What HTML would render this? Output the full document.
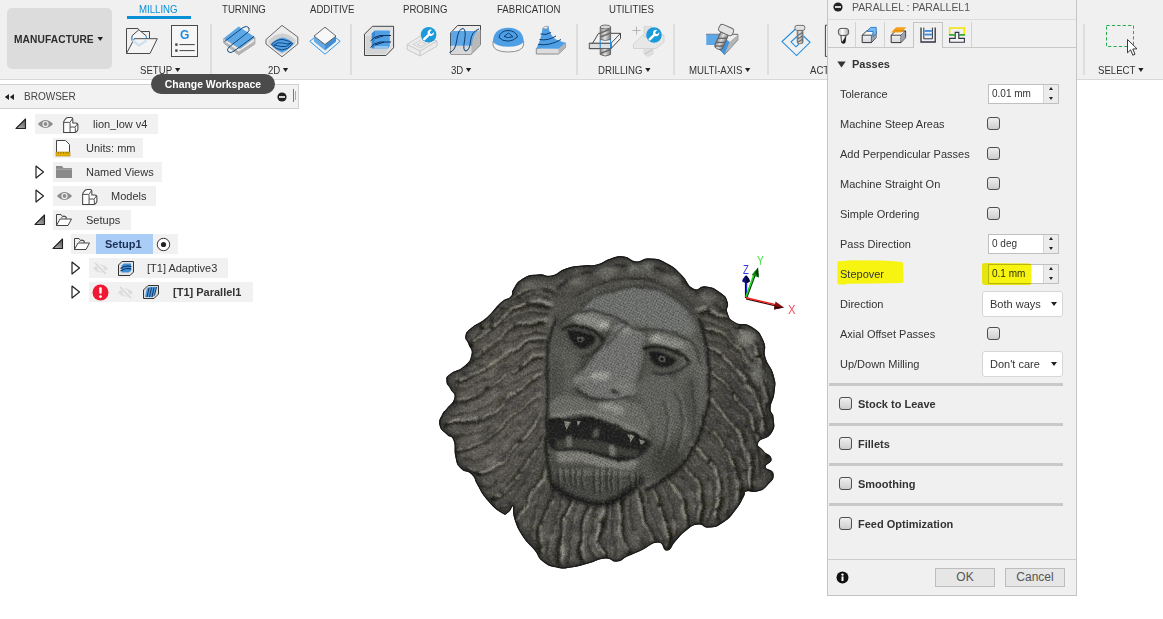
<!DOCTYPE html>
<html>
<head>
<meta charset="utf-8">
<title>Fusion 360 - Manufacture</title>
<style>
html,body{margin:0;padding:0;}
body{width:1163px;height:619px;overflow:hidden;background:#fff;font-family:"Liberation Sans",sans-serif;font-size:11px;color:#333;position:relative;}
.abs{position:absolute;}
#toolbar{left:0;top:0;width:1163px;height:80px;background:#f0f0f0;border-bottom:1px solid #d8d8d8;box-sizing:border-box;}
#wsbtn{left:7px;top:8px;width:105px;height:61px;background:#dcdcdc;border-radius:5px;}
#wsbtn span{position:absolute;left:7px;top:25px;transform:scaleX(.927);transform-origin:0 0;white-space:nowrap;font-weight:bold;font-size:11px;color:#2c2c2c;letter-spacing:0.1px;}
.tab{top:3px;font-size:11px;color:#333;white-space:nowrap;transform:scaleX(.875);transform-origin:0 0;}
.tab.on{color:#0a8fd6;}
.grp{top:64px;font-size:11px;color:#333;white-space:nowrap;transform:scaleX(.875);transform-origin:0 0;}
.car{display:inline-block;width:0;height:0;border-left:3px solid transparent;border-right:3px solid transparent;border-top:4px solid #222;vertical-align:middle;margin-left:3px;position:relative;top:-1px;}
.vsep{top:24px;width:2px;height:51px;background:#dddddd;margin-left:-1px;}
#tooltip{left:151px;top:74px;width:124px;height:20px;border-radius:10px;background:#4b4b4b;color:#fff;font-weight:bold;font-size:11px;line-height:20px;text-align:center;}
#browserhdr{left:0;top:84px;width:299px;height:25px;background:#f2f2f2;border:1px solid #d0d0d0;border-left:none;box-sizing:border-box;}
.row{height:20px;background:#f1f1f1;}
.rtxt{font-size:11px;color:#333;white-space:nowrap;line-height:13px;}
/* dialog */
#dlg{left:827px;top:0;width:250px;height:596px;background:#f0f0f0;border:1px solid #c4c4c4;border-top:none;box-sizing:border-box;}
.lbl{left:12px;font-size:11px;color:#333;white-space:nowrap;line-height:13px;}
.cb{width:13px;height:13px;box-sizing:border-box;border:1px solid #4e4e4e;border-radius:3px;background:linear-gradient(#efefef,#cdcdcd);}
.inp{left:160px;width:71px;height:20px;box-sizing:border-box;border:1px solid #c0c0c0;background:#fff;}
.inp span{position:absolute;left:3px;top:3px;font-size:10px;color:#333;}
.spin{position:absolute;right:0;top:0;width:14px;height:18px;background:#ececec;border-left:1px solid #d4d4d4;}
.spin i{position:absolute;left:5px;width:0;height:0;border-left:2px solid transparent;border-right:2px solid transparent;}
.spin i.u{top:2px;border-bottom:3px solid #222;}
.spin i.d{top:12px;border-top:3px solid #222;}
.sel{left:154px;width:81px;height:26px;box-sizing:border-box;border:1px solid #d6d6d6;border-radius:3px;background:#fff;}
.sel span{position:absolute;left:7px;top:6px;font-size:11px;color:#333;}
.sel i{position:absolute;right:5px;top:10px;width:0;height:0;border-left:3px solid transparent;border-right:3px solid transparent;border-top:4px solid #222;}
.hsep{left:1px;width:234px;height:3px;background:#c9c9c9;}
.sec{left:30px;font-weight:bold;font-size:11px;color:#333;white-space:nowrap;line-height:13px;}
.btn{top:568px;width:60px;height:19px;box-sizing:border-box;border:1px solid #bdbdbd;background:#e6e6e6;font-size:12px;color:#555;text-align:center;line-height:17px;}
</style>
</head>
<body>

<!-- ======= VIEWPORT (lion + triad) ======= -->
<svg class="abs" id="scene" style="left:0;top:0" width="1163" height="619" viewBox="0 0 1163 619">
<!--LION_START--><defs>
  <filter id="b1" x="-30%" y="-30%" width="160%" height="160%"><feGaussianBlur stdDeviation="0.8"/></filter>
  <filter id="b15" x="-30%" y="-30%" width="160%" height="160%"><feGaussianBlur stdDeviation="1.5"/></filter>
  <filter id="b2" x="-30%" y="-30%" width="160%" height="160%"><feGaussianBlur stdDeviation="2"/></filter>
  <filter id="b3" x="-30%" y="-30%" width="160%" height="160%"><feGaussianBlur stdDeviation="3"/></filter>
  <filter id="b5" x="-30%" y="-30%" width="160%" height="160%"><feGaussianBlur stdDeviation="5"/></filter>
  <filter id="b8" x="-40%" y="-40%" width="180%" height="180%"><feGaussianBlur stdDeviation="8"/></filter>
  <filter id="grain" x="0" y="0" width="100%" height="100%">
    <feTurbulence type="fractalNoise" baseFrequency="0.55" numOctaves="2" seed="7" result="n"/>
    <feColorMatrix in="n" type="matrix" values="0 0 0 0 0  0 0 0 0 0  0 0 0 0 0  2.2 1.6 0 0 -1.55"/>
  </filter>
  <filter id="grainL" x="0" y="0" width="100%" height="100%">
    <feTurbulence type="fractalNoise" baseFrequency="0.5" numOctaves="2" seed="3" result="n"/>
    <feColorMatrix in="n" type="matrix" values="0 0 0 0 0.85  0 0 0 0 0.85  0 0 0 0 0.8  0 2.0 1.4 0 -1.6"/>
  </filter>
  <filter id="wob" x="-10%" y="-10%" width="120%" height="120%">
    <feTurbulence type="fractalNoise" baseFrequency="0.04" numOctaves="3" seed="11" result="t"/>
    <feDisplacementMap in="SourceGraphic" in2="t" scale="9" xChannelSelector="R" yChannelSelector="G"/>
  </filter>
  <filter id="wobf" x="-10%" y="-10%" width="120%" height="120%">
    <feTurbulence type="fractalNoise" baseFrequency="0.08" numOctaves="2" seed="5" result="t"/>
    <feDisplacementMap in="SourceGraphic" in2="t" scale="3.5" xChannelSelector="R" yChannelSelector="G"/>
  </filter>
  <filter id="marble" x="0" y="0" width="100%" height="100%">
    <feTurbulence type="fractalNoise" baseFrequency="0.05 0.08" numOctaves="4" seed="21" result="n"/>
    <feColorMatrix in="n" type="matrix" values="0 0 0 0 0.05  0 0 0 0 0.05  0 0 0 0 0.05  3.2 0 0 0 -1.4"/>
  </filter>
  <filter id="marbleL" x="0" y="0" width="100%" height="100%">
    <feTurbulence type="fractalNoise" baseFrequency="0.07 0.1" numOctaves="4" seed="33" result="n"/>
    <feColorMatrix in="n" type="matrix" values="0 0 0 0 0.72  0 0 0 0 0.72  0 0 0 0 0.68  0 3.4 0 0 -1.8"/>
  </filter>
  <pattern id="dots" width="2.6" height="2.6" patternUnits="userSpaceOnUse" patternTransform="rotate(28)"><circle cx="1" cy="1" r="0.55" fill="#1e1e1c"/></pattern>
  <path id="lionsil" d="M597.0 265.0 C605.4 262.9 602.9 261.4 611.0 259.0 C619.1 256.6 616.5 256.1 624.0 257.0 C631.5 257.9 628.2 261.4 636.0 262.0 C643.8 262.6 640.7 258.4 650.0 259.0 C659.3 259.6 657.7 259.2 667.0 264.0 C676.3 268.8 673.2 267.5 681.0 275.0 C688.8 282.5 685.5 285.4 693.0 289.0 C700.5 292.6 697.9 285.8 706.0 287.0 C714.1 288.2 713.7 288.5 720.0 293.0 C726.3 297.5 724.9 296.0 727.0 302.0 C729.1 308.0 724.6 306.7 727.0 313.0 C729.4 319.3 727.8 318.8 735.0 323.0 C742.2 327.2 742.6 321.6 751.0 327.0 C759.4 332.4 758.8 331.7 763.0 341.0 C767.2 350.3 762.0 347.8 765.0 358.0 C768.0 368.2 770.3 364.8 773.0 375.0 C775.7 385.2 774.9 382.1 774.0 392.0 C773.1 401.9 770.3 400.2 770.0 408.0 C769.7 415.8 772.7 410.5 773.0 418.0 C773.3 425.5 775.5 425.8 771.0 433.0 C766.5 440.2 760.4 436.6 758.0 442.0 C755.6 447.4 759.1 445.9 763.0 451.0 C766.9 456.1 770.4 454.2 771.0 459.0 C771.6 463.8 764.4 462.5 765.0 467.0 C765.6 471.5 772.4 468.6 773.0 474.0 C773.6 479.4 771.8 479.9 767.0 485.0 C762.2 490.1 763.3 489.2 757.0 491.0 C750.7 492.8 750.2 489.2 746.0 491.0 C741.8 492.8 746.3 491.3 743.0 497.0 C739.7 502.7 741.0 502.5 735.0 510.0 C729.0 517.5 730.8 516.9 723.0 522.0 C715.2 527.1 716.5 526.4 709.0 527.0 C701.5 527.6 704.9 523.1 698.0 524.0 C691.1 524.9 692.9 524.9 686.0 530.0 C679.1 535.1 680.7 535.0 675.0 541.0 C669.3 547.0 672.1 549.7 667.0 550.0 C661.9 550.3 665.8 542.0 658.0 542.0 C650.2 542.0 650.3 545.8 641.0 550.0 C631.7 554.2 634.2 552.7 627.0 556.0 C619.8 559.3 623.6 560.4 617.0 561.0 C610.4 561.6 613.7 557.4 605.0 558.0 C596.3 558.6 598.2 560.3 588.0 563.0 C577.8 565.7 580.3 565.8 571.0 567.0 C561.7 568.2 565.4 568.8 557.0 567.0 C548.6 565.2 549.6 566.1 543.0 561.0 C536.4 555.9 541.0 557.5 535.0 550.0 C529.0 542.5 529.0 545.3 523.0 536.0 C517.0 526.7 518.0 528.0 515.0 519.0 C512.0 510.0 515.1 508.1 513.0 506.0 C510.9 503.9 511.6 510.2 508.0 512.0 C504.4 513.8 507.3 515.9 501.0 512.0 C494.7 508.1 493.9 507.1 487.0 499.0 C480.1 490.9 482.5 492.5 478.0 485.0 C473.5 477.5 477.1 479.1 472.0 474.0 C466.9 468.9 465.8 473.1 461.0 468.0 C456.2 462.9 458.1 465.4 456.0 457.0 C453.9 448.6 456.7 446.9 454.0 440.0 C451.3 433.1 451.2 438.5 447.0 434.0 C442.8 429.5 441.2 431.0 440.0 425.0 C438.8 419.0 440.9 418.8 443.0 414.0 C445.1 409.2 443.4 413.8 447.0 409.0 C450.6 404.2 453.8 404.0 455.0 398.0 C456.2 392.0 453.4 394.1 451.0 389.0 C448.6 383.9 447.0 385.5 447.0 381.0 C447.0 376.5 445.9 378.2 451.0 374.0 C456.1 369.8 457.7 372.7 464.0 367.0 C470.3 361.3 470.5 361.9 472.0 355.0 C473.5 348.1 470.8 349.7 469.0 344.0 C467.2 338.3 465.1 340.8 466.0 336.0 C466.9 331.2 465.7 333.4 472.0 328.0 C478.3 322.6 478.3 325.5 487.0 318.0 C495.7 310.5 493.8 309.3 501.0 303.0 C508.2 296.7 507.1 301.2 511.0 297.0 C514.9 292.8 510.4 294.4 514.0 289.0 C517.6 283.6 515.8 283.2 523.0 279.0 C530.2 274.8 529.3 275.9 538.0 275.0 C546.7 274.1 543.6 277.8 552.0 276.0 C560.4 274.2 556.7 272.0 566.0 269.0 C575.3 266.0 573.7 267.2 583.0 266.0 C592.3 264.8 588.6 267.1 597.0 265.0 Z"/>
  <clipPath id="lionclip"><use href="#lionsil"/></clipPath>
</defs>
<g id="lion">
<use href="#lionsil" fill="#56544e" stroke="#1a1a19" stroke-width="1.2" stroke-linejoin="round"/>
<g clip-path="url(#lionclip)">
<ellipse cx="500" cy="400" rx="45" ry="80" fill="#67645d" filter="url(#b8)"/>
<ellipse cx="600" cy="530" rx="70" ry="30" fill="#5c5a54" filter="url(#b8)"/>
<ellipse cx="745" cy="420" rx="22" ry="70" fill="#45433f" filter="url(#b8)"/>
<g filter="url(#wob)">
<path d="M552.0 292.0 C543.0 292.0 542.3 286.7 525.0 292.0 C507.7 297.3 515.0 296.0 500.0 308.0 C485.0 320.0 486.7 321.3 480.0 328.0" stroke="#121211" stroke-width="5.2" fill="none" filter="url(#b15)" stroke-linecap="round" opacity="0.95"/>
<path d="M548.9 297.4 C540.0 297.8 540.0 292.2 522.1 298.6 C504.2 305.0 510.4 303.4 495.3 316.6 C480.1 329.8 482.9 331.0 476.7 338.2" stroke="#121211" stroke-width="3.0" fill="none" filter="url(#b15)" stroke-linecap="round" opacity="0.7"/>
<path d="M548.0 306.0 C538.7 306.7 538.0 301.3 520.0 308.0 C502.0 314.7 510.7 313.3 494.0 326.0 C477.3 338.7 478.0 339.3 470.0 346.0" stroke="#121211" stroke-width="5.2" fill="none" filter="url(#b15)" stroke-linecap="round" opacity="0.95"/>
<path d="M547.6 312.9 C537.6 314.3 536.9 309.6 517.6 317.1 C498.4 324.6 506.6 322.6 489.7 335.4 C472.8 348.3 474.5 348.9 466.9 355.7" stroke="#121211" stroke-width="3.0" fill="none" filter="url(#b15)" stroke-linecap="round" opacity="0.7"/>
<path d="M545.0 322.0 C535.0 324.0 534.0 319.3 515.0 328.0 C496.0 336.7 504.3 336.7 488.0 348.0 C471.7 359.3 473.3 357.3 466.0 362.0" stroke="#121211" stroke-width="5.2" fill="none" filter="url(#b15)" stroke-linecap="round" opacity="0.95"/>
<path d="M545.8 332.2 C535.9 333.7 536.1 328.0 516.2 336.8 C496.3 345.5 504.0 346.3 486.2 358.5 C468.5 370.7 470.7 368.4 462.9 373.4" stroke="#121211" stroke-width="3.0" fill="none" filter="url(#b15)" stroke-linecap="round" opacity="0.7"/>
<path d="M544.0 340.0 C534.3 342.7 534.3 338.7 515.0 348.0 C495.7 357.3 505.0 356.7 486.0 368.0 C467.0 379.3 467.3 377.3 458.0 382.0" stroke="#121211" stroke-width="5.2" fill="none" filter="url(#b15)" stroke-linecap="round" opacity="0.95"/>
<path d="M544.5 347.3 C534.7 351.5 534.4 349.2 514.9 359.7 C495.4 370.1 506.0 368.5 486.0 378.7 C466.0 388.9 465.3 386.5 454.9 390.4" stroke="#121211" stroke-width="3.0" fill="none" filter="url(#b15)" stroke-linecap="round" opacity="0.7"/>
<path d="M542.0 358.0 C532.7 362.0 532.7 358.7 514.0 370.0 C495.3 381.3 506.7 381.3 486.0 392.0 C465.3 402.7 463.3 398.7 452.0 402.0" stroke="#121211" stroke-width="5.2" fill="none" filter="url(#b15)" stroke-linecap="round" opacity="0.95"/>
<path d="M542.7 369.5 C532.9 373.4 532.2 369.3 513.2 381.2 C494.2 393.1 506.5 394.2 485.6 405.3 C464.7 416.4 462.2 411.4 450.5 414.4" stroke="#121211" stroke-width="3.0" fill="none" filter="url(#b15)" stroke-linecap="round" opacity="0.7"/>
<path d="M540.0 378.0 C530.7 383.3 531.3 380.7 512.0 394.0 C492.7 407.3 504.0 408.0 482.0 418.0 C460.0 428.0 458.0 422.0 446.0 424.0" stroke="#121211" stroke-width="5.2" fill="none" filter="url(#b15)" stroke-linecap="round" opacity="0.95"/>
<path d="M539.0 387.7 C530.2 393.7 532.2 391.9 512.4 405.7 C492.6 419.6 499.7 419.1 479.6 429.2 C459.6 439.4 461.4 433.9 452.3 436.2" stroke="#121211" stroke-width="3.0" fill="none" filter="url(#b15)" stroke-linecap="round" opacity="0.7"/>
<path d="M538.0 398.0 C529.3 404.7 531.3 403.3 512.0 418.0 C492.7 432.7 498.7 430.7 480.0 442.0 C461.3 453.3 464.0 448.7 456.0 452.0" stroke="#121211" stroke-width="5.2" fill="none" filter="url(#b15)" stroke-linecap="round" opacity="0.95"/>
<path d="M537.2 408.5 C529.8 415.4 531.9 413.8 515.1 429.1 C498.4 444.4 503.9 443.8 486.9 454.4 C469.8 464.9 471.6 458.6 464.0 460.8" stroke="#121211" stroke-width="3.0" fill="none" filter="url(#b15)" stroke-linecap="round" opacity="0.7"/>
<path d="M540.0 418.0 C533.3 425.3 535.3 423.3 520.0 440.0 C504.7 456.7 511.3 457.3 494.0 468.0 C476.7 478.7 476.7 470.7 468.0 472.0" stroke="#121211" stroke-width="5.2" fill="none" filter="url(#b15)" stroke-linecap="round" opacity="0.95"/>
<path d="M541.2 426.8 C535.6 434.6 538.1 432.7 524.5 450.1 C511.0 467.5 515.8 466.9 500.4 479.0 C485.0 491.0 485.7 483.8 478.3 486.2" stroke="#121211" stroke-width="3.0" fill="none" filter="url(#b15)" stroke-linecap="round" opacity="0.7"/>
<path d="M543.0 438.0 C538.0 446.0 539.7 445.3 528.0 462.0 C516.3 478.7 520.7 475.3 508.0 488.0 C495.3 500.7 496.0 496.0 490.0 500.0" stroke="#121211" stroke-width="5.2" fill="none" filter="url(#b15)" stroke-linecap="round" opacity="0.95"/>
<path d="M547.1 451.4 C541.3 459.2 540.1 458.9 529.7 474.9 C519.4 490.9 525.3 487.7 516.1 499.5 C506.8 511.3 506.7 506.7 501.9 510.3" stroke="#121211" stroke-width="3.0" fill="none" filter="url(#b15)" stroke-linecap="round" opacity="0.7"/>
<path d="M548.0 468.0 C543.7 475.3 543.7 476.0 535.0 490.0 C526.3 504.0 528.3 499.3 522.0 510.0 C515.7 520.7 518.0 518.0 516.0 522.0" stroke="#121211" stroke-width="5.2" fill="none" filter="url(#b15)" stroke-linecap="round" opacity="0.95"/>
<path d="M550.7 478.8 C546.5 487.0 544.5 488.0 538.2 503.3 C531.8 518.6 534.7 512.6 531.6 524.8 C528.5 537.0 529.8 534.8 528.9 539.8" stroke="#121211" stroke-width="3.0" fill="none" filter="url(#b15)" stroke-linecap="round" opacity="0.7"/>
<path d="M556.0 490.0 C552.3 498.3 551.0 499.7 545.0 515.0 C539.0 530.3 539.7 523.0 538.0 536.0 C536.3 549.0 539.3 548.0 540.0 554.0" stroke="#121211" stroke-width="5.2" fill="none" filter="url(#b15)" stroke-linecap="round" opacity="0.95"/>
<path d="M562.1 495.2 C559.8 503.8 560.2 505.2 555.4 521.1 C550.6 537.0 549.3 529.7 547.6 542.8 C546.0 555.8 549.5 554.4 550.5 560.3" stroke="#121211" stroke-width="3.0" fill="none" filter="url(#b15)" stroke-linecap="round" opacity="0.7"/>
<path d="M572.0 502.0 C568.7 509.7 566.7 510.3 562.0 525.0 C557.3 539.7 558.7 533.0 558.0 546.0 C557.3 559.0 559.3 558.0 560.0 564.0" stroke="#121211" stroke-width="5.2" fill="none" filter="url(#b15)" stroke-linecap="round" opacity="0.95"/>
<path d="M580.2 502.8 C577.4 510.2 575.7 509.7 571.8 525.0 C567.9 540.4 569.0 536.5 568.5 548.8 C568.0 561.2 569.7 557.6 570.3 562.0" stroke="#121211" stroke-width="3.0" fill="none" filter="url(#b15)" stroke-linecap="round" opacity="0.7"/>
<path d="M590.0 506.0 C587.3 513.3 585.3 514.0 582.0 528.0 C578.7 542.0 580.0 536.0 580.0 548.0 C580.0 560.0 581.3 558.7 582.0 564.0" stroke="#121211" stroke-width="5.2" fill="none" filter="url(#b15)" stroke-linecap="round" opacity="0.95"/>
<path d="M596.2 504.7 C595.2 512.3 595.1 514.0 593.1 527.5 C591.1 540.9 589.2 533.8 590.2 544.9 C591.1 556.0 594.0 555.4 595.9 560.7" stroke="#121211" stroke-width="3.0" fill="none" filter="url(#b15)" stroke-linecap="round" opacity="0.7"/>
<path d="M606.0 506.0 C604.7 513.3 603.3 515.0 602.0 528.0 C600.7 541.0 600.7 535.0 602.0 545.0 C603.3 555.0 604.7 553.7 606.0 558.0" stroke="#121211" stroke-width="5.2" fill="none" filter="url(#b15)" stroke-linecap="round" opacity="0.95"/>
<path d="M612.8 501.2 C612.0 508.7 609.9 510.4 610.2 523.7 C610.5 537.0 611.7 530.3 613.7 541.1 C615.7 551.9 615.3 551.0 616.2 556.0" stroke="#121211" stroke-width="3.0" fill="none" filter="url(#b15)" stroke-linecap="round" opacity="0.7"/>
<path d="M622.0 500.0 C622.0 507.3 621.3 508.7 622.0 522.0 C622.7 535.3 621.3 529.3 624.0 540.0 C626.7 550.7 628.0 549.3 630.0 554.0" stroke="#121211" stroke-width="5.2" fill="none" filter="url(#b15)" stroke-linecap="round" opacity="0.95"/>
<path d="M629.0 498.0 C629.5 504.4 627.8 504.9 630.5 517.1 C633.2 529.3 632.6 524.0 637.1 534.6 C641.6 545.2 641.7 544.2 644.0 548.9" stroke="#121211" stroke-width="3.0" fill="none" filter="url(#b15)" stroke-linecap="round" opacity="0.7"/>
<path d="M638.0 492.0 C639.3 498.7 638.7 499.3 642.0 512.0 C645.3 524.7 644.0 519.3 648.0 530.0 C652.0 540.7 652.0 539.3 654.0 544.0" stroke="#121211" stroke-width="5.2" fill="none" filter="url(#b15)" stroke-linecap="round" opacity="0.95"/>
<path d="M644.0 489.6 C646.0 495.8 645.8 495.0 650.1 508.2 C654.5 521.3 652.9 516.6 657.0 529.1 C661.1 541.5 660.5 540.0 662.3 545.5" stroke="#121211" stroke-width="3.0" fill="none" filter="url(#b15)" stroke-linecap="round" opacity="0.7"/>
<path d="M652.0 488.0 C655.3 493.7 656.7 492.7 662.0 505.0 C667.3 517.3 666.0 511.0 668.0 525.0 C670.0 539.0 668.0 539.7 668.0 547.0" stroke="#121211" stroke-width="5.2" fill="none" filter="url(#b15)" stroke-linecap="round" opacity="0.95"/>
<path d="M657.1 482.0 C661.4 487.6 663.7 486.2 670.0 498.8 C676.2 511.5 674.1 507.4 675.9 520.0 C677.8 532.6 675.7 531.1 675.6 536.7" stroke="#121211" stroke-width="3.0" fill="none" filter="url(#b15)" stroke-linecap="round" opacity="0.7"/>
<path d="M666.0 478.0 C670.7 483.7 673.3 483.7 680.0 495.0 C686.7 506.3 684.0 500.3 686.0 512.0 C688.0 523.7 686.0 524.0 686.0 530.0" stroke="#121211" stroke-width="5.2" fill="none" filter="url(#b15)" stroke-linecap="round" opacity="0.95"/>
<path d="M674.7 470.3 C679.8 475.9 683.0 475.0 690.0 487.1 C696.9 499.2 694.2 493.0 695.6 506.6 C697.0 520.2 694.6 520.9 694.2 528.0" stroke="#121211" stroke-width="3.0" fill="none" filter="url(#b15)" stroke-linecap="round" opacity="0.7"/>
<path d="M680.0 462.0 C685.3 468.0 688.7 467.3 696.0 480.0 C703.3 492.7 700.7 485.3 702.0 500.0 C703.3 514.7 700.7 516.0 700.0 524.0" stroke="#121211" stroke-width="5.2" fill="none" filter="url(#b15)" stroke-linecap="round" opacity="0.95"/>
<path d="M686.0 451.9 C691.3 458.7 693.0 458.4 701.8 472.5 C710.7 486.6 710.1 477.5 712.6 494.2 C715.1 510.9 710.4 513.2 709.3 522.6" stroke="#121211" stroke-width="3.0" fill="none" filter="url(#b15)" stroke-linecap="round" opacity="0.7"/>
<path d="M692.0 445.0 C698.0 450.7 700.7 448.7 710.0 462.0 C719.3 475.3 716.7 465.7 720.0 485.0 C723.3 504.3 720.0 508.3 720.0 520.0" stroke="#121211" stroke-width="5.2" fill="none" filter="url(#b15)" stroke-linecap="round" opacity="0.95"/>
<path d="M698.2 435.6 C704.6 441.6 707.1 439.4 717.3 453.6 C727.4 467.8 725.0 457.9 728.6 478.2 C732.2 498.6 728.3 502.5 728.1 514.7" stroke="#121211" stroke-width="3.0" fill="none" filter="url(#b15)" stroke-linecap="round" opacity="0.7"/>
<path d="M702.0 425.0 C708.7 431.7 710.7 430.0 722.0 445.0 C733.3 460.0 730.7 449.7 736.0 470.0 C741.3 490.3 737.3 494.0 738.0 506.0" stroke="#121211" stroke-width="5.2" fill="none" filter="url(#b15)" stroke-linecap="round" opacity="0.95"/>
<path d="M707.8 410.8 C714.5 418.6 716.3 418.6 727.9 434.3 C739.5 450.1 736.4 437.5 742.7 458.2 C748.9 478.9 745.3 483.7 746.6 496.5" stroke="#121211" stroke-width="3.0" fill="none" filter="url(#b15)" stroke-linecap="round" opacity="0.7"/>
<path d="M710.0 400.0 C716.7 406.7 717.3 403.3 730.0 420.0 C742.7 436.7 740.7 426.7 748.0 450.0 C755.3 473.3 750.7 476.7 752.0 490.0" stroke="#121211" stroke-width="5.2" fill="none" filter="url(#b15)" stroke-linecap="round" opacity="0.95"/>
<path d="M712.9 388.2 C718.8 394.2 717.7 389.6 730.7 406.2 C743.8 422.7 742.3 414.6 752.0 437.8 C761.8 461.0 757.3 463.1 760.0 475.7" stroke="#121211" stroke-width="3.0" fill="none" filter="url(#b15)" stroke-linecap="round" opacity="0.7"/>
<path d="M712.0 375.0 C719.7 381.7 720.7 378.3 735.0 395.0 C749.3 411.7 744.7 404.0 755.0 425.0 C765.3 446.0 762.3 447.0 766.0 458.0" stroke="#121211" stroke-width="5.2" fill="none" filter="url(#b15)" stroke-linecap="round" opacity="0.95"/>
<path d="M709.9 360.5 C718.8 366.4 721.1 362.1 736.7 378.1 C752.2 394.0 746.0 385.8 756.5 408.5 C767.0 431.2 764.3 433.6 768.2 446.1" stroke="#121211" stroke-width="3.0" fill="none" filter="url(#b15)" stroke-linecap="round" opacity="0.7"/>
<path d="M710.0 350.0 C718.3 355.0 720.0 350.0 735.0 365.0 C750.0 380.0 744.0 372.7 755.0 395.0 C766.0 417.3 763.7 419.7 768.0 432.0" stroke="#121211" stroke-width="5.2" fill="none" filter="url(#b15)" stroke-linecap="round" opacity="0.95"/>
<path d="M709.5 340.2 C717.7 343.9 719.1 338.3 734.0 351.3 C748.9 364.3 742.3 357.1 754.2 379.3 C766.0 401.6 764.4 405.2 769.6 418.1" stroke="#121211" stroke-width="3.0" fill="none" filter="url(#b15)" stroke-linecap="round" opacity="0.7"/>
<path d="M706.0 330.0 C714.0 333.3 714.7 328.3 730.0 340.0 C745.3 351.7 739.3 344.3 752.0 365.0 C764.7 385.7 762.7 389.7 768.0 402.0" stroke="#121211" stroke-width="5.2" fill="none" filter="url(#b15)" stroke-linecap="round" opacity="0.95"/>
<path d="M702.9 321.1 C710.5 323.1 709.8 317.0 725.6 327.1 C741.4 337.3 736.4 332.0 750.4 351.5 C764.3 370.9 761.8 374.1 767.5 385.4" stroke="#121211" stroke-width="3.0" fill="none" filter="url(#b15)" stroke-linecap="round" opacity="0.7"/>
<path d="M700.0 312.0 C708.3 314.0 709.0 309.3 725.0 318.0 C741.0 326.7 735.0 321.3 748.0 338.0 C761.0 354.7 758.7 358.0 764.0 368.0" stroke="#121211" stroke-width="5.2" fill="none" filter="url(#b15)" stroke-linecap="round" opacity="0.95"/>
<path d="M554.8 289.2 C545.8 289.2 545.1 283.9 527.8 289.2 C510.5 294.5 517.8 293.2 502.8 305.2 C487.8 317.2 489.5 318.5 482.8 325.2" stroke="#bcb9ae" stroke-width="2.2" fill="none" filter="url(#b1)" stroke-linecap="round" opacity="0.85" stroke-dasharray="10 2 6 3"/>
<path d="M550.8 295.5 C541.9 295.9 541.9 290.3 524.0 296.7 C506.1 303.1 512.3 301.5 497.2 314.7 C482.0 327.9 484.8 329.1 478.6 336.3" stroke="#a09d93" stroke-width="1.4" fill="none" filter="url(#b1)" stroke-linecap="round" opacity="0.85" stroke-dasharray="15 4 11 6"/>
<path d="M550.8 303.2 C541.5 303.9 540.8 298.5 522.8 305.2 C504.8 311.9 513.5 310.5 496.8 323.2 C480.1 335.9 480.8 336.5 472.8 343.2" stroke="#d6d3c8" stroke-width="2.2" fill="none" filter="url(#b1)" stroke-linecap="round" opacity="0.85" stroke-dasharray="20 6 16 3"/>
<path d="M549.5 311.0 C539.5 312.4 538.8 307.7 519.5 315.2 C500.3 322.7 508.5 320.7 491.6 333.5 C474.7 346.4 476.4 347.0 468.8 353.8" stroke="#8e8b82" stroke-width="1.4" fill="none" filter="url(#b1)" stroke-linecap="round" opacity="0.85" stroke-dasharray="25 2 21 6"/>
<path d="M547.8 319.2 C537.8 321.2 536.8 316.5 517.8 325.2 C498.8 333.9 507.1 333.9 490.8 345.2 C474.5 356.5 476.1 354.5 468.8 359.2" stroke="#bcb9ae" stroke-width="2.2" fill="none" filter="url(#b1)" stroke-linecap="round" opacity="0.85" stroke-dasharray="30 4 6 3"/>
<path d="M547.7 330.3 C537.8 331.8 538.0 326.1 518.1 334.9 C498.2 343.6 505.9 344.4 488.1 356.6 C470.4 368.8 472.6 366.5 464.8 371.5" stroke="#a09d93" stroke-width="1.4" fill="none" filter="url(#b1)" stroke-linecap="round" opacity="0.85" stroke-dasharray="10 6 11 6"/>
<path d="M546.8 337.2 C537.1 339.9 537.1 335.9 517.8 345.2 C498.5 354.5 507.8 353.9 488.8 365.2 C469.8 376.5 470.1 374.5 460.8 379.2" stroke="#d6d3c8" stroke-width="2.2" fill="none" filter="url(#b1)" stroke-linecap="round" opacity="0.85" stroke-dasharray="15 2 16 3"/>
<path d="M546.4 345.4 C536.6 349.6 536.3 347.3 516.8 357.8 C497.3 368.2 507.9 366.6 487.9 376.8 C467.9 387.0 467.2 384.6 456.8 388.5" stroke="#8e8b82" stroke-width="1.4" fill="none" filter="url(#b1)" stroke-linecap="round" opacity="0.85" stroke-dasharray="20 4 21 6"/>
<path d="M544.8 355.2 C535.5 359.2 535.5 355.9 516.8 367.2 C498.1 378.5 509.5 378.5 488.8 389.2 C468.1 399.9 466.1 395.9 454.8 399.2" stroke="#bcb9ae" stroke-width="2.2" fill="none" filter="url(#b1)" stroke-linecap="round" opacity="0.85" stroke-dasharray="25 6 6 3"/>
<path d="M544.6 367.6 C534.8 371.5 534.1 367.4 515.1 379.3 C496.1 391.2 508.4 392.3 487.5 403.4 C466.6 414.5 464.1 409.5 452.4 412.5" stroke="#a09d93" stroke-width="1.4" fill="none" filter="url(#b1)" stroke-linecap="round" opacity="0.85" stroke-dasharray="30 2 11 6"/>
<path d="M542.8 375.2 C533.5 380.5 534.1 377.9 514.8 391.2 C495.5 404.5 506.8 405.2 484.8 415.2 C462.8 425.2 460.8 419.2 448.8 421.2" stroke="#d6d3c8" stroke-width="2.2" fill="none" filter="url(#b1)" stroke-linecap="round" opacity="0.85" stroke-dasharray="10 4 16 3"/>
<path d="M540.9 385.8 C532.1 391.8 534.1 390.0 514.3 403.8 C494.5 417.7 501.6 417.2 481.5 427.3 C461.5 437.5 463.3 432.0 454.2 434.3" stroke="#8e8b82" stroke-width="1.4" fill="none" filter="url(#b1)" stroke-linecap="round" opacity="0.85" stroke-dasharray="15 6 21 6"/>
<path d="M540.8 395.2 C532.1 401.9 534.1 400.5 514.8 415.2 C495.5 429.9 501.5 427.9 482.8 439.2 C464.1 450.5 466.8 445.9 458.8 449.2" stroke="#bcb9ae" stroke-width="2.2" fill="none" filter="url(#b1)" stroke-linecap="round" opacity="0.85" stroke-dasharray="20 2 6 3"/>
<path d="M539.1 406.6 C531.7 413.5 533.8 411.9 517.0 427.2 C500.3 442.5 505.8 441.9 488.8 452.5 C471.7 463.0 473.5 456.7 465.9 458.9" stroke="#a09d93" stroke-width="1.4" fill="none" filter="url(#b1)" stroke-linecap="round" opacity="0.85" stroke-dasharray="25 4 11 6"/>
<path d="M542.8 415.2 C536.1 422.5 538.1 420.5 522.8 437.2 C507.5 453.9 514.1 454.5 496.8 465.2 C479.5 475.9 479.5 467.9 470.8 469.2" stroke="#d6d3c8" stroke-width="2.2" fill="none" filter="url(#b1)" stroke-linecap="round" opacity="0.85" stroke-dasharray="30 6 16 3"/>
<path d="M543.1 424.9 C537.5 432.7 540.0 430.8 526.4 448.2 C512.9 465.6 517.7 465.0 502.3 477.1 C486.9 489.1 487.6 481.9 480.2 484.3" stroke="#8e8b82" stroke-width="1.4" fill="none" filter="url(#b1)" stroke-linecap="round" opacity="0.85" stroke-dasharray="10 2 21 6"/>
<path d="M545.8 435.2 C540.8 443.2 542.5 442.5 530.8 459.2 C519.1 475.9 523.5 472.5 510.8 485.2 C498.1 497.9 498.8 493.2 492.8 497.2" stroke="#bcb9ae" stroke-width="2.2" fill="none" filter="url(#b1)" stroke-linecap="round" opacity="0.85" stroke-dasharray="15 4 6 3"/>
<path d="M549.0 449.5 C543.2 457.3 542.0 457.0 531.6 473.0 C521.3 489.0 527.2 485.8 518.0 497.6 C508.7 509.4 508.6 504.8 503.8 508.4" stroke="#a09d93" stroke-width="1.4" fill="none" filter="url(#b1)" stroke-linecap="round" opacity="0.85" stroke-dasharray="20 6 11 6"/>
<path d="M550.8 465.2 C546.5 472.5 546.5 473.2 537.8 487.2 C529.1 501.2 531.1 496.5 524.8 507.2 C518.5 517.9 520.8 515.2 518.8 519.2" stroke="#d6d3c8" stroke-width="2.2" fill="none" filter="url(#b1)" stroke-linecap="round" opacity="0.85" stroke-dasharray="25 2 16 3"/>
<path d="M552.6 476.9 C548.4 485.1 546.4 486.1 540.1 501.4 C533.7 516.7 536.6 510.7 533.5 522.9 C530.4 535.1 531.7 532.9 530.8 537.9" stroke="#8e8b82" stroke-width="1.4" fill="none" filter="url(#b1)" stroke-linecap="round" opacity="0.85" stroke-dasharray="30 4 21 6"/>
<path d="M558.8 487.2 C555.1 495.5 553.8 496.9 547.8 512.2 C541.8 527.5 542.5 520.2 540.8 533.2 C539.1 546.2 542.1 545.2 542.8 551.2" stroke="#bcb9ae" stroke-width="2.2" fill="none" filter="url(#b1)" stroke-linecap="round" opacity="0.85" stroke-dasharray="10 6 6 3"/>
<path d="M564.0 493.3 C561.7 501.9 562.1 503.3 557.3 519.2 C552.5 535.1 551.2 527.8 549.5 540.9 C547.9 553.9 551.4 552.5 552.4 558.4" stroke="#a09d93" stroke-width="1.4" fill="none" filter="url(#b1)" stroke-linecap="round" opacity="0.85" stroke-dasharray="15 2 11 6"/>
<path d="M574.8 499.2 C571.5 506.9 569.5 507.5 564.8 522.2 C560.1 536.9 561.5 530.2 560.8 543.2 C560.1 556.2 562.1 555.2 562.8 561.2" stroke="#d6d3c8" stroke-width="2.2" fill="none" filter="url(#b1)" stroke-linecap="round" opacity="0.85" stroke-dasharray="20 4 16 3"/>
<path d="M582.1 500.9 C579.3 508.3 577.6 507.8 573.7 523.1 C569.8 538.5 570.9 534.6 570.4 546.9 C569.9 559.3 571.6 555.7 572.2 560.1" stroke="#8e8b82" stroke-width="1.4" fill="none" filter="url(#b1)" stroke-linecap="round" opacity="0.85" stroke-dasharray="25 6 21 6"/>
<path d="M592.8 503.2 C590.1 510.5 588.1 511.2 584.8 525.2 C581.5 539.2 582.8 533.2 582.8 545.2 C582.8 557.2 584.1 555.9 584.8 561.2" stroke="#bcb9ae" stroke-width="2.2" fill="none" filter="url(#b1)" stroke-linecap="round" opacity="0.85" stroke-dasharray="30 2 6 3"/>
<path d="M598.1 502.8 C597.1 510.4 597.0 512.1 595.0 525.6 C593.0 539.0 591.1 531.9 592.1 543.0 C593.0 554.1 595.9 553.5 597.8 558.8" stroke="#a09d93" stroke-width="1.4" fill="none" filter="url(#b1)" stroke-linecap="round" opacity="0.85" stroke-dasharray="10 4 11 6"/>
<path d="M603.2 503.2 C601.9 510.5 600.5 512.2 599.2 525.2 C597.9 538.2 597.9 532.2 599.2 542.2 C600.5 552.2 601.9 550.9 603.2 555.2" stroke="#d6d3c8" stroke-width="2.2" fill="none" filter="url(#b1)" stroke-linecap="round" opacity="0.85" stroke-dasharray="15 6 16 3"/>
<path d="M610.9 499.3 C610.1 506.8 608.0 508.5 608.3 521.8 C608.6 535.1 609.8 528.4 611.8 539.2 C613.8 550.0 613.4 549.1 614.3 554.1" stroke="#8e8b82" stroke-width="1.4" fill="none" filter="url(#b1)" stroke-linecap="round" opacity="0.85" stroke-dasharray="20 2 21 6"/>
<path d="M619.2 497.2 C619.2 504.5 618.5 505.9 619.2 519.2 C619.9 532.5 618.5 526.5 621.2 537.2 C623.9 547.9 625.2 546.5 627.2 551.2" stroke="#bcb9ae" stroke-width="2.2" fill="none" filter="url(#b1)" stroke-linecap="round" opacity="0.85" stroke-dasharray="25 4 6 3"/>
<path d="M627.1 496.1 C627.6 502.5 625.9 503.0 628.6 515.2 C631.3 527.4 630.7 522.1 635.2 532.7 C639.7 543.3 639.8 542.3 642.1 547.0" stroke="#a09d93" stroke-width="1.4" fill="none" filter="url(#b1)" stroke-linecap="round" opacity="0.85" stroke-dasharray="30 6 11 6"/>
<path d="M635.2 489.2 C636.5 495.9 635.9 496.5 639.2 509.2 C642.5 521.9 641.2 516.5 645.2 527.2 C649.2 537.9 649.2 536.5 651.2 541.2" stroke="#d6d3c8" stroke-width="2.2" fill="none" filter="url(#b1)" stroke-linecap="round" opacity="0.85" stroke-dasharray="10 2 16 3"/>
<path d="M642.1 487.7 C644.1 493.9 643.9 493.1 648.2 506.3 C652.6 519.4 651.0 514.7 655.1 527.2 C659.2 539.6 658.6 538.1 660.4 543.6" stroke="#8e8b82" stroke-width="1.4" fill="none" filter="url(#b1)" stroke-linecap="round" opacity="0.85" stroke-dasharray="15 4 21 6"/>
<path d="M649.2 485.2 C652.5 490.9 653.9 489.9 659.2 502.2 C664.5 514.5 663.2 508.2 665.2 522.2 C667.2 536.2 665.2 536.9 665.2 544.2" stroke="#bcb9ae" stroke-width="2.2" fill="none" filter="url(#b1)" stroke-linecap="round" opacity="0.85" stroke-dasharray="20 6 6 3"/>
<path d="M655.2 480.1 C659.5 485.7 661.8 484.3 668.1 496.9 C674.3 509.6 672.2 505.5 674.0 518.1 C675.9 530.7 673.8 529.2 673.7 534.8" stroke="#a09d93" stroke-width="1.4" fill="none" filter="url(#b1)" stroke-linecap="round" opacity="0.85" stroke-dasharray="25 2 11 6"/>
<path d="M663.2 475.2 C667.9 480.9 670.5 480.9 677.2 492.2 C683.9 503.5 681.2 497.5 683.2 509.2 C685.2 520.9 683.2 521.2 683.2 527.2" stroke="#d6d3c8" stroke-width="2.2" fill="none" filter="url(#b1)" stroke-linecap="round" opacity="0.85" stroke-dasharray="30 4 16 3"/>
<path d="M672.8 468.4 C677.9 474.0 681.1 473.1 688.1 485.2 C695.0 497.3 692.3 491.1 693.7 504.7 C695.1 518.3 692.7 519.0 692.3 526.1" stroke="#8e8b82" stroke-width="1.4" fill="none" filter="url(#b1)" stroke-linecap="round" opacity="0.85" stroke-dasharray="10 6 21 6"/>
<path d="M677.2 459.2 C682.5 465.2 685.9 464.5 693.2 477.2 C700.5 489.9 697.9 482.5 699.2 497.2 C700.5 511.9 697.9 513.2 697.2 521.2" stroke="#bcb9ae" stroke-width="2.2" fill="none" filter="url(#b1)" stroke-linecap="round" opacity="0.85" stroke-dasharray="15 2 6 3"/>
<path d="M684.1 450.0 C689.4 456.8 691.1 456.5 699.9 470.6 C708.8 484.7 708.2 475.6 710.7 492.3 C713.2 509.0 708.5 511.3 707.4 520.7" stroke="#a09d93" stroke-width="1.4" fill="none" filter="url(#b1)" stroke-linecap="round" opacity="0.85" stroke-dasharray="20 4 11 6"/>
<path d="M689.2 442.2 C695.2 447.9 697.9 445.9 707.2 459.2 C716.5 472.5 713.9 462.9 717.2 482.2 C720.5 501.5 717.2 505.5 717.2 517.2" stroke="#d6d3c8" stroke-width="2.2" fill="none" filter="url(#b1)" stroke-linecap="round" opacity="0.85" stroke-dasharray="25 6 16 3"/>
<path d="M696.3 433.7 C702.7 439.7 705.2 437.5 715.4 451.7 C725.5 465.9 723.1 456.0 726.7 476.3 C730.3 496.7 726.4 500.6 726.2 512.8" stroke="#8e8b82" stroke-width="1.4" fill="none" filter="url(#b1)" stroke-linecap="round" opacity="0.85" stroke-dasharray="30 2 21 6"/>
<path d="M699.2 422.2 C705.9 428.9 707.9 427.2 719.2 442.2 C730.5 457.2 727.9 446.9 733.2 467.2 C738.5 487.5 734.5 491.2 735.2 503.2" stroke="#bcb9ae" stroke-width="2.2" fill="none" filter="url(#b1)" stroke-linecap="round" opacity="0.85" stroke-dasharray="10 4 6 3"/>
<path d="M705.9 408.9 C712.6 416.7 714.4 416.7 726.0 432.4 C737.6 448.2 734.5 435.6 740.8 456.3 C747.0 477.0 743.4 481.8 744.7 494.6" stroke="#a09d93" stroke-width="1.4" fill="none" filter="url(#b1)" stroke-linecap="round" opacity="0.85" stroke-dasharray="15 6 11 6"/>
<path d="M707.2 397.2 C713.9 403.9 714.5 400.5 727.2 417.2 C739.9 433.9 737.9 423.9 745.2 447.2 C752.5 470.5 747.9 473.9 749.2 487.2" stroke="#d6d3c8" stroke-width="2.2" fill="none" filter="url(#b1)" stroke-linecap="round" opacity="0.85" stroke-dasharray="20 2 16 3"/>
<path d="M711.0 386.3 C716.9 392.3 715.8 387.7 728.8 404.3 C741.9 420.8 740.4 412.7 750.1 435.9 C759.9 459.1 755.4 461.2 758.1 473.8" stroke="#8e8b82" stroke-width="1.4" fill="none" filter="url(#b1)" stroke-linecap="round" opacity="0.85" stroke-dasharray="25 4 21 6"/>
<path d="M709.2 372.2 C716.9 378.9 717.9 375.5 732.2 392.2 C746.5 408.9 741.9 401.2 752.2 422.2 C762.5 443.2 759.5 444.2 763.2 455.2" stroke="#bcb9ae" stroke-width="2.2" fill="none" filter="url(#b1)" stroke-linecap="round" opacity="0.85" stroke-dasharray="30 6 6 3"/>
<path d="M708.0 358.6 C716.9 364.5 719.2 360.2 734.8 376.2 C750.3 392.1 744.1 383.9 754.6 406.6 C765.1 429.3 762.4 431.7 766.3 444.2" stroke="#a09d93" stroke-width="1.4" fill="none" filter="url(#b1)" stroke-linecap="round" opacity="0.85" stroke-dasharray="10 2 11 6"/>
<path d="M707.2 347.2 C715.5 352.2 717.2 347.2 732.2 362.2 C747.2 377.2 741.2 369.9 752.2 392.2 C763.2 414.5 760.9 416.9 765.2 429.2" stroke="#d6d3c8" stroke-width="2.2" fill="none" filter="url(#b1)" stroke-linecap="round" opacity="0.85" stroke-dasharray="15 4 16 3"/>
<path d="M707.6 338.3 C715.8 342.0 717.2 336.4 732.1 349.4 C747.0 362.4 740.4 355.2 752.3 377.4 C764.1 399.7 762.5 403.3 767.7 416.2" stroke="#8e8b82" stroke-width="1.4" fill="none" filter="url(#b1)" stroke-linecap="round" opacity="0.85" stroke-dasharray="20 6 21 6"/>
<path d="M703.2 327.2 C711.2 330.5 711.9 325.5 727.2 337.2 C742.5 348.9 736.5 341.5 749.2 362.2 C761.9 382.9 759.9 386.9 765.2 399.2" stroke="#bcb9ae" stroke-width="2.2" fill="none" filter="url(#b1)" stroke-linecap="round" opacity="0.85" stroke-dasharray="25 2 6 3"/>
<path d="M701.0 319.2 C708.6 321.2 707.9 315.1 723.7 325.2 C739.5 335.4 734.5 330.1 748.5 349.6 C762.4 369.0 759.9 372.2 765.6 383.5" stroke="#a09d93" stroke-width="1.4" fill="none" filter="url(#b1)" stroke-linecap="round" opacity="0.85" stroke-dasharray="30 4 11 6"/>
<path d="M697.2 309.2 C705.5 311.2 706.2 306.5 722.2 315.2 C738.2 323.9 732.2 318.5 745.2 335.2 C758.2 351.9 755.9 355.2 761.2 365.2" stroke="#d6d3c8" stroke-width="2.2" fill="none" filter="url(#b1)" stroke-linecap="round" opacity="0.85" stroke-dasharray="10 6 16 3"/>
</g>
<g filter="url(#wobf)">
<path d="M556 290 Q575 272 600 270 Q625 262 650 268 Q680 272 700 296 Q715 300 724 312" stroke="#1c1c1a" stroke-width="2.5" fill="none" filter="url(#b1)"/>
<path d="M575 296 Q600 278 640 278 Q672 284 694 308" stroke="#222220" stroke-width="2" fill="none" filter="url(#b1)"/>
<ellipse cx="640" cy="268" rx="13" ry="5" fill="#7b7b74" filter="url(#b2)"/>
<ellipse cx="605" cy="271" rx="12" ry="5" fill="#707069" filter="url(#b2)"/>
<ellipse cx="672" cy="278" rx="10" ry="5" fill="#6e6e67" filter="url(#b2)"/>
<ellipse cx="578" cy="282" rx="10" ry="5" fill="#66665f" filter="url(#b2)"/>
<ellipse cx="708" cy="298" rx="9" ry="6" fill="#6b6b64" filter="url(#b2)"/>
<ellipse cx="746" cy="338" rx="9" ry="8" fill="#86867e" filter="url(#b2)"/>
<ellipse cx="535" cy="286" rx="10" ry="6" fill="#63635d" filter="url(#b2)"/>
<ellipse cx="757" cy="372" rx="6" ry="12" fill="#70706a" filter="url(#b2)"/>
</g>
<rect x="435" y="250" width="345" height="322" filter="url(#marble)" opacity="0.5"/>
<rect x="435" y="250" width="345" height="322" filter="url(#marbleL)" opacity="0.16"/>
<g filter="url(#wobf)">
<path d="M556.0 320.0 C564.4 302.0 561.8 309.6 575.0 300.0 C588.2 290.4 580.5 292.8 600.0 288.0 C619.5 283.2 617.5 282.2 640.0 284.0 C662.5 285.8 657.6 283.2 675.0 294.0 C692.4 304.8 688.7 303.2 698.0 320.0 C707.3 336.8 703.6 329.0 706.0 350.0 C708.4 371.0 708.4 366.6 706.0 390.0 C703.6 413.4 705.8 407.6 698.0 428.0 C690.2 448.4 694.4 441.8 680.0 458.0 C665.6 474.2 671.0 470.6 650.0 482.0 C629.0 493.4 633.4 493.0 610.0 496.0 C586.6 499.0 590.0 500.4 572.0 492.0 C554.0 483.6 558.1 486.6 550.0 468.0 C541.9 449.4 545.3 451.9 545.0 430.0 C544.7 408.1 548.4 416.0 549.0 395.0 C549.6 374.0 544.9 382.5 547.0 360.0 C549.1 337.5 547.6 338.0 556.0 320.0 Z" fill="#5b5b57" filter="url(#b3)"/>
<path d="M588.0 302.0 C595.2 294.8 594.9 294.2 612.0 290.0 C629.1 285.8 626.4 285.6 645.0 288.0 C663.6 290.4 659.9 288.4 674.0 298.0 C688.1 307.6 687.2 308.6 692.0 320.0 C696.8 331.4 699.0 332.4 690.0 336.0 C681.0 339.6 679.4 335.6 662.0 332.0 C644.6 328.4 648.8 327.6 632.0 324.0 C615.2 320.4 619.2 323.0 606.0 320.0 C592.8 317.0 593.4 319.4 588.0 314.0 C582.6 308.6 580.8 309.2 588.0 302.0 Z" fill="#7d7f7c" filter="url(#b2)"/>
<path d="M686.0 340.0 C692.6 334.0 696.3 337.0 702.0 352.0 C707.7 367.0 706.5 369.0 705.0 390.0 C703.5 411.0 703.3 408.2 697.0 422.0 C690.7 435.8 690.3 440.2 684.0 436.0 C677.7 431.8 677.2 427.2 676.0 408.0 C674.8 388.8 677.0 392.4 680.0 372.0 C683.0 351.6 679.4 346.0 686.0 340.0 Z" fill="#72726d" filter="url(#b2)"/>
<path d="M550.0 354.0 C556.0 342.0 557.6 347.0 566.0 350.0 C574.4 353.0 576.5 351.4 578.0 364.0 C579.5 376.6 576.4 376.4 571.0 392.0 C565.6 407.6 566.6 407.6 560.0 416.0 C553.4 424.4 553.2 427.8 549.0 420.0 C544.8 412.2 545.7 409.8 546.0 390.0 C546.3 370.2 544.0 366.0 550.0 354.0 Z" fill="#686863" filter="url(#b2)"/>
<path d="M640.0 380.0 C648.4 373.4 655.4 372.0 668.0 378.0 C680.6 384.0 679.6 384.4 682.0 400.0 C684.4 415.6 682.6 416.2 676.0 430.0 C669.4 443.8 667.8 449.0 660.0 446.0 C652.2 443.0 656.0 433.8 650.0 420.0 C644.0 406.2 643.0 412.0 640.0 400.0 C637.0 388.0 631.6 386.6 640.0 380.0 Z" fill="#6c6c67" filter="url(#b2)"/>
<path d="M618.0 324.0 C628.8 321.6 634.2 323.6 642.0 332.0 C649.8 340.4 645.2 338.2 644.0 352.0 C642.8 365.8 642.2 364.8 638.0 378.0 C633.8 391.2 640.8 389.7 630.0 396.0 C619.2 402.3 617.6 400.8 602.0 399.0 C586.4 397.2 586.1 396.9 578.0 390.0 C569.9 383.1 571.4 384.4 575.0 376.0 C578.6 367.6 580.7 372.8 590.0 362.0 C599.3 351.2 597.6 351.4 606.0 340.0 C614.4 328.6 607.2 326.4 618.0 324.0 Z" fill="#80817e" filter="url(#b1)"/>
<path d="M612 330 Q600 348 588 360 Q578 368 575 378" stroke="#2e2e2c" stroke-width="3" fill="none" filter="url(#b2)" opacity="0.8"/>
<path d="M644 340 Q646 362 636 384" stroke="#3a3a37" stroke-width="2.5" fill="none" filter="url(#b2)" opacity="0.7"/>
<ellipse cx="600" cy="376" rx="10" ry="4" fill="#b9b9b2" filter="url(#b2)"/>
<ellipse cx="626" cy="330" rx="7" ry="4" fill="#a2a29c" filter="url(#b2)"/>
<ellipse cx="581" cy="384" rx="4" ry="2.8" fill="#1f1f1d" filter="url(#b1)"/>
<ellipse cx="616" cy="391" rx="4.6" ry="2.8" fill="#1f1f1d" filter="url(#b1)"/>
<path d="M573 379 Q576 396 596 399 Q612 402 630 396" stroke="#242422" stroke-width="1.8" fill="none" filter="url(#b1)"/>
<ellipse cx="580" cy="381" rx="8" ry="6" fill="#8b8b86" filter="url(#b2)"/>
<ellipse cx="622" cy="387" rx="9" ry="6" fill="#8b8b86" filter="url(#b2)"/>
<ellipse cx="668" cy="462" rx="16" ry="18" fill="#3c3c39" filter="url(#b5)" opacity="0.75"/>
<ellipse cx="690" cy="400" rx="8" ry="30" fill="#454542" filter="url(#b5)" opacity="0.6"/>
<ellipse cx="556" cy="380" rx="7" ry="26" fill="#454542" filter="url(#b5)" opacity="0.6"/>
<path d="M664 400 Q672 430 660 456 M676 392 Q688 425 676 452 M690 380 Q700 410 690 440" stroke="#2a2a28" stroke-width="1.6" fill="none" filter="url(#b1)" opacity="0.7"/>
<path d="M667 400 Q675 430 663 456 M679 392 Q691 425 679 452" stroke="#a0a099" stroke-width="1.2" fill="none" filter="url(#b1)" opacity="0.6"/>
<path d="M553.0 400.0 C559.3 394.6 558.5 395.1 572.0 396.0 C585.5 396.9 581.8 401.5 598.0 403.0 C614.2 404.5 611.9 398.3 626.0 401.0 C640.1 403.7 638.7 402.7 645.0 412.0 C651.3 421.3 651.5 426.6 647.0 432.0 C642.5 437.4 641.7 432.7 630.0 430.0 C618.3 427.3 621.5 427.5 608.0 423.0 C594.5 418.5 598.8 416.8 585.0 415.0 C571.2 413.2 572.2 417.3 562.0 417.0 C551.8 416.7 553.7 419.1 551.0 414.0 C548.3 408.9 546.7 405.4 553.0 400.0 Z" fill="#777772" filter="url(#b1)"/>
<ellipse cx="612" cy="408" rx="14" ry="4.5" fill="#a4a49d" filter="url(#b2)" transform="rotate(14 612 408)"/>
<path d="M598 400 V416" stroke="#33332f" stroke-width="1.4" filter="url(#b1)"/>
<path d="M567 331 Q580 327 596 338 Q593 349 580 349 Q571 345 567 336 Z" fill="#1e1e1c" filter="url(#b1)"/>
<ellipse cx="581" cy="339" rx="3.6" ry="3.2" fill="#5c5c57"/><circle cx="581" cy="339" r="1.6" fill="#141413"/>
<path d="M648 352 Q660 348 677 360 Q672 369 660 367 Q651 363 648 356 Z" fill="#1e1e1c" filter="url(#b1)"/>
<ellipse cx="662" cy="359" rx="3.6" ry="3.2" fill="#5c5c57"/><circle cx="662" cy="359" r="1.6" fill="#141413"/>
<ellipse cx="590" cy="321" rx="19" ry="6.5" fill="#9c9c96" filter="url(#b2)" transform="rotate(14 590 321)"/>
<ellipse cx="668" cy="342" rx="19" ry="6.5" fill="#9c9c96" filter="url(#b2)" transform="rotate(16 668 342)"/>
<ellipse cx="604" cy="326" rx="6" ry="3.5" fill="#c8c8c0" filter="url(#b2)"/>
<ellipse cx="655" cy="339" rx="6" ry="3" fill="#bcbcb4" filter="url(#b2)"/>
<path d="M562 331 Q568 325 580 326 Q594 329 604 340" stroke="#141413" stroke-width="3" fill="none" filter="url(#b1)"/>
<path d="M643 349 Q654 345 666 348 Q680 352 690 362" stroke="#141413" stroke-width="3" fill="none" filter="url(#b1)"/>
<path d="M558 328 Q564 315 582 311 Q604 310 620 320 Q630 326 640 330 Q664 326 692 342 Q700 350 700 364" stroke="#2a2a28" stroke-width="1.6" fill="none" filter="url(#b1)"/>
<path d="M604 340 Q600 352 580 357 M690 362 Q676 378 652 373" stroke="#2c2c2a" stroke-width="2" fill="none" filter="url(#b1)"/>
<path d="M627 324 Q616 336 606 346" stroke="#3a3a37" stroke-width="1.6" fill="none" filter="url(#b1)"/>
<path d="M582 306 Q600 288 640 286 Q675 290 694 316" stroke="#2a2a28" stroke-width="2" fill="none" filter="url(#b15)"/>
<path d="M547.0 424.0 C549.1 416.5 548.5 419.9 556.0 419.0 C563.5 418.1 561.8 421.3 572.0 421.0 C582.2 420.7 579.8 417.1 590.0 418.0 C600.2 418.9 596.4 420.1 606.0 424.0 C615.6 427.9 611.8 427.1 622.0 431.0 C632.2 434.9 632.2 432.8 640.0 437.0 C647.8 441.2 648.0 439.3 648.0 445.0 C648.0 450.7 646.6 450.9 640.0 456.0 C633.4 461.1 636.8 461.4 626.0 462.0 C615.2 462.6 617.8 461.3 604.0 458.0 C590.2 454.7 593.2 452.8 580.0 451.0 C566.8 449.2 569.3 454.1 560.0 452.0 C550.7 449.9 552.9 452.4 549.0 444.0 C545.1 435.6 544.9 431.5 547.0 424.0 Z" fill="#242422" filter="url(#b1)"/>
<path d="M547 422 Q556 417 572 420 Q590 416 606 423 Q622 430 640 436 Q648 440 650 447" stroke="#121211" stroke-width="2.4" fill="none" filter="url(#b1)"/>
<path d="M552 416 Q572 411 590 412 Q610 416 628 426 Q640 431 648 438" stroke="#a6a69f" stroke-width="2.2" fill="none" filter="url(#b15)" opacity="0.8"/>
<path d="M556 440 Q585 436 610 444 Q626 450 640 450 L636 458 Q610 456 590 450 Q570 446 556 450 Z" fill="#45453f" filter="url(#b1)"/>
<path d="M564 421 l2.5 10 l4.5 -9 Z M627 433 l3 10 l4.5 -7 Z M577 421 l2 5 l3 -5 Z M640 439 l2 6 l3 -4Z" fill="#96968d"/>
<rect x="566" y="437" width="6" height="10" fill="#77776f" filter="url(#b1)"/><rect x="609" y="445" width="6.5" height="11" fill="#83837a" filter="url(#b1)"/>
<ellipse cx="596" cy="433" rx="3.4" ry="5" fill="#5a5a54" filter="url(#b1)"/>
<path d="M556 452 Q580 449 604 458 Q620 464 640 460 L634 469 Q612 470 596 466 Q575 460 558 463 Z" fill="#8c8c84" filter="url(#b1)"/>
<path d="M548.0 460.0 C550.4 454.0 545.6 461.3 560.0 464.0 C574.4 466.7 573.8 466.9 596.0 469.0 C618.2 471.1 620.2 472.8 634.0 471.0 C647.8 469.2 640.2 460.3 642.0 463.0 C643.8 465.7 644.8 470.7 640.0 480.0 C635.2 489.3 638.0 487.4 626.0 494.0 C614.0 500.6 616.2 500.8 600.0 502.0 C583.8 503.2 586.4 503.4 572.0 498.0 C557.6 492.6 559.2 495.4 552.0 484.0 C544.8 472.6 545.6 466.0 548.0 460.0 Z" fill="#504f4b" filter="url(#b2)"/>
<path d="M556 470 Q596 474 636 474" stroke="#84847d" stroke-width="5" fill="none" filter="url(#b2)" opacity="0.8"/>
<path d="M552 484 Q572 503 602 505 Q628 497 642 478" stroke="#101010" stroke-width="5.5" fill="none" filter="url(#b2)"/>
<path d="M546 436 Q545 468 554 486" stroke="#1a1a19" stroke-width="3" fill="none" filter="url(#b1)"/>
<path d="M558 468 q-2 8 1 15" stroke="#252523" stroke-width="1.4" fill="none" filter="url(#b1)"/>
<path d="M560.5 468 q-2 8 1 13" stroke="#94948c" stroke-width="1.1" fill="none" filter="url(#b1)" opacity="0.8"/>
<path d="M564 468 q-1 8 0 17" stroke="#252523" stroke-width="1.4" fill="none" filter="url(#b1)"/>
<path d="M566.5 468 q-1 8 0 15" stroke="#94948c" stroke-width="1.1" fill="none" filter="url(#b1)" opacity="0.8"/>
<path d="M570 468 q0 9 1 18" stroke="#252523" stroke-width="1.4" fill="none" filter="url(#b1)"/>
<path d="M572.5 468 q0 9 1 16" stroke="#94948c" stroke-width="1.1" fill="none" filter="url(#b1)" opacity="0.8"/>
<path d="M576 469 q-2 10 0 19" stroke="#252523" stroke-width="1.4" fill="none" filter="url(#b1)"/>
<path d="M578.5 469 q-2 10 0 17" stroke="#94948c" stroke-width="1.1" fill="none" filter="url(#b1)" opacity="0.8"/>
<path d="M582 469 q-1 10 1 20" stroke="#252523" stroke-width="1.4" fill="none" filter="url(#b1)"/>
<path d="M584.5 469 q-1 10 1 18" stroke="#94948c" stroke-width="1.1" fill="none" filter="url(#b1)" opacity="0.8"/>
<path d="M588 469 q0 11 0 22" stroke="#252523" stroke-width="1.4" fill="none" filter="url(#b1)"/>
<path d="M590.5 469 q0 11 0 20" stroke="#94948c" stroke-width="1.1" fill="none" filter="url(#b1)" opacity="0.8"/>
<path d="M594 470 q-2 12 1 23" stroke="#252523" stroke-width="1.4" fill="none" filter="url(#b1)"/>
<path d="M596.5 470 q-2 12 1 21" stroke="#94948c" stroke-width="1.1" fill="none" filter="url(#b1)" opacity="0.8"/>
<path d="M600 470 q-1 12 0 24" stroke="#252523" stroke-width="1.4" fill="none" filter="url(#b1)"/>
<path d="M602.5 470 q-1 12 0 22" stroke="#94948c" stroke-width="1.1" fill="none" filter="url(#b1)" opacity="0.8"/>
<path d="M606 470 q0 11 1 22" stroke="#252523" stroke-width="1.4" fill="none" filter="url(#b1)"/>
<path d="M608.5 470 q0 11 1 20" stroke="#94948c" stroke-width="1.1" fill="none" filter="url(#b1)" opacity="0.8"/>
<path d="M612 471 q-2 10 0 21" stroke="#252523" stroke-width="1.4" fill="none" filter="url(#b1)"/>
<path d="M614.5 471 q-2 10 0 19" stroke="#94948c" stroke-width="1.1" fill="none" filter="url(#b1)" opacity="0.8"/>
<path d="M618 471 q-1 10 1 20" stroke="#252523" stroke-width="1.4" fill="none" filter="url(#b1)"/>
<path d="M620.5 471 q-1 10 1 18" stroke="#94948c" stroke-width="1.1" fill="none" filter="url(#b1)" opacity="0.8"/>
<path d="M624 471 q0 9 0 18" stroke="#252523" stroke-width="1.4" fill="none" filter="url(#b1)"/>
<path d="M626.5 471 q0 9 0 16" stroke="#94948c" stroke-width="1.1" fill="none" filter="url(#b1)" opacity="0.8"/>
<path d="M630 472 q-2 8 1 17" stroke="#252523" stroke-width="1.4" fill="none" filter="url(#b1)"/>
<path d="M632.5 472 q-2 8 1 15" stroke="#94948c" stroke-width="1.1" fill="none" filter="url(#b1)" opacity="0.8"/>
<path d="M636 472 q-1 8 0 16" stroke="#252523" stroke-width="1.4" fill="none" filter="url(#b1)"/>
<path d="M638.5 472 q-1 8 0 14" stroke="#94948c" stroke-width="1.1" fill="none" filter="url(#b1)" opacity="0.8"/>
<path d="M557 318 Q546 340 547 370 Q549 400 546 428" stroke="#1e1e1c" stroke-width="2.6" fill="none" filter="url(#b1)"/>
<path d="M699 318 Q711 350 709 395 Q705 430 690 455 Q672 480 645 490" stroke="#1e1e1c" stroke-width="3" fill="none" filter="url(#b1)"/>
</g>
<path d="M556.0 320.0 C564.4 302.0 561.8 309.6 575.0 300.0 C588.2 290.4 580.5 292.8 600.0 288.0 C619.5 283.2 617.5 282.2 640.0 284.0 C662.5 285.8 657.6 283.2 675.0 294.0 C692.4 304.8 688.7 303.2 698.0 320.0 C707.3 336.8 703.6 329.0 706.0 350.0 C708.4 371.0 708.4 366.6 706.0 390.0 C703.6 413.4 705.8 407.6 698.0 428.0 C690.2 448.4 694.4 441.8 680.0 458.0 C665.6 474.2 671.0 470.6 650.0 482.0 C629.0 493.4 633.4 493.0 610.0 496.0 C586.6 499.0 590.0 500.4 572.0 492.0 C554.0 483.6 558.1 486.6 550.0 468.0 C541.9 449.4 545.3 451.9 545.0 430.0 C544.7 408.1 548.4 416.0 549.0 395.0 C549.6 374.0 544.9 382.5 547.0 360.0 C549.1 337.5 547.6 338.0 556.0 320.0 Z" fill="url(#dots)" opacity="0.7"/>
<rect x="435" y="250" width="345" height="322" filter="url(#grain)" opacity="0.22"/>
<rect x="435" y="250" width="345" height="322" filter="url(#grainL)" opacity="0.14"/>
</g>
<use href="#lionsil" fill="none" stroke="#1d1d1c" stroke-width="1" stroke-linejoin="round"/>
<g clip-path="url(#lionclip)"><use href="#lionsil" fill="none" stroke="#141413" stroke-width="5" filter="url(#b2)" opacity="0.55"/></g>
</g><!--LION_END-->
<!--TRIAD_START--><g id="triad" font-family="Liberation Sans, sans-serif">
  <path d="M745.6 298 L745.6 278" stroke="#0a0a3c" stroke-width="1.4"/>
  <path d="M746.6 298 L746.6 278" stroke="#2222d8" stroke-width="1.2"/>
  <path d="M742.2 281.5 Q742 279 746 275.2 Q750 279 749.8 281.5 Q746 284.2 742.2 281.5 Z" fill="#0c0c8a"/>
  <path d="M746 275.2 Q750 279 749.8 281.5 Q748 283 746 283.2 Z" fill="#07073c"/>
  <path d="M746.6 298 L756.2 272" stroke="#0a300a" stroke-width="1.4"/>
  <path d="M745.8 297 L755.2 271.5" stroke="#18d818" stroke-width="1.6"/>
  <path d="M751.6 275 L758 267.6 L758.8 277.6 Z" fill="#0f8a0f"/>
  <path d="M755 273 L758 267.6 L758.8 277.6 Z" fill="#0a3a0a"/>
  <path d="M746 298.8 L780 306.8" stroke="#3a0808" stroke-width="1.3"/>
  <path d="M746 297.8 L780 305.6" stroke="#ee2020" stroke-width="1.4"/>
  <path d="M775.5 301.6 L784 307.4 L774 309.4 Z" fill="#8a1010"/>
  <path d="M774.6 306 L784 307.4 L774 309.4 Z" fill="#3a0808"/>
  <text x="743" y="274" font-size="12.4" textLength="5.8" lengthAdjust="spacingAndGlyphs" fill="#3636e8">Z</text>
  <text x="757" y="264.8" font-size="12" textLength="6.8" lengthAdjust="spacingAndGlyphs" fill="#3fe03f">Y</text>
  <text x="788" y="314" font-size="12.4" textLength="7.6" lengthAdjust="spacingAndGlyphs" fill="#f4525e">X</text>
</g>
<!--TRIAD_END-->
</svg>

<!-- ======= TOOLBAR ======= -->
<div class="abs" id="toolbar">
  <div class="abs" id="wsbtn"><span>MANUFACTURE<i class="car" style="margin-left:4px"></i></span></div>

  <div class="abs tab on" style="left:139px">MILLING</div>
  <div class="abs" style="left:127px;top:16px;width:64px;height:3px;background:#0a8fd6;"></div>
  <div class="abs tab" style="left:222px">TURNING</div>
  <div class="abs tab" style="left:310px">ADDITIVE</div>
  <div class="abs tab" style="left:403px">PROBING</div>
  <div class="abs tab" style="left:497px">FABRICATION</div>
  <div class="abs tab" style="left:609px">UTILITIES</div>

  <div class="abs grp" style="left:140px">SETUP<i class="car"></i></div>
  <div class="abs grp" style="left:268px">2D<i class="car"></i></div>
  <div class="abs grp" style="left:451px">3D<i class="car"></i></div>
  <div class="abs grp" style="left:598px">DRILLING<i class="car"></i></div>
  <div class="abs grp" style="left:689px">MULTI-AXIS<i class="car"></i></div>
  <div class="abs grp" style="left:810px">ACTIONS</div>
  <div class="abs grp" style="left:1098px">SELECT<i class="car"></i></div>

  <div class="abs vsep" style="left:211px"></div>
  <div class="abs vsep" style="left:351px"></div>
  <div class="abs vsep" style="left:577px"></div>
  <div class="abs vsep" style="left:674px"></div>
  <div class="abs vsep" style="left:768px"></div>
  <div class="abs vsep" style="left:1084px"></div>
  <!--ICONS_START--><svg class="abs" style="left:0;top:0" width="1163" height="79" viewBox="0 0 1163 79">
<defs>
  <linearGradient id="metal" x1="0" x2="1" y1="0" y2="0"><stop offset="0" stop-color="#8a8a8a"/><stop offset="0.45" stop-color="#e2e2e2"/><stop offset="1" stop-color="#7a7a7a"/></linearGradient>
  <g id="wrench"><circle cx="0" cy="0" r="7.8" fill="#1d9ad9"/><path d="M-4.2 4.6 L0.2 0.2 A3.1 3.1 0 0 1 4.3 -3.9 L2.2 -1.8 L2.7 -0.2 L4.3 0.3 L6.2 -1.7 A3.1 3.1 0 0 1 1.9 2 L-2.4 6.3 A1.2 1.2 0 0 1 -4.2 4.6 Z" fill="#fff" transform="translate(-1,-1)"/></g>
</defs>
<!-- SETUP: folder with envelope -->
<g fill="none" stroke="#4a4a4a" stroke-width="1">
  <path d="M126.5 53.5 V28.5 H138 L139.5 31.5 H149.5 V38.5"/>
  <path d="M131.8 38.5 V36 L138.8 29.8 L146.4 36 V38.5" fill="#f6f6f6"/>
  <path d="M131.8 36 V40.5" stroke="#4ca3e6" stroke-width="1.6"/>
  <path d="M146.4 36 V38.5" stroke="#4ca3e6" stroke-width="1.2"/>
  <path d="M126.5 53.5 L134.3 38.7 H157.3 L150 53.5 Z" fill="#f4f4f4"/>
  <path d="M133 40.5 L139 45.5 L146.5 40.5" stroke="#cfe0ee" stroke-width="2.4"/>
</g>
<!-- SETUP: G doc -->
<rect x="171.5" y="25.5" width="26" height="31" fill="#f6f6f6" stroke="#4a4a4a" stroke-width="1"/>
<text x="184.6" y="38.6" text-anchor="middle" font-family="Liberation Sans, sans-serif" font-weight="bold" font-size="12" fill="#1e8be0">G</text>
<rect x="175.2" y="43.4" width="2.4" height="2.4" fill="#444"/><rect x="179.5" y="44.1" width="15.3" height="1" fill="#444"/>
<rect x="175.2" y="49.4" width="2.4" height="2.4" fill="#444"/><rect x="179.5" y="50.1" width="15.3" height="1" fill="#444"/>

<!-- 2D adaptive -->
<path d="M223.8 38.5 V43 L238.7 54.8 L254.8 44 V37.5 L240 48.5 Z" fill="#e8e8e8" stroke="#8a8a8a" stroke-width="0.8" stroke-linejoin="round"/>
<path d="M223.8 43 L238.7 54.8 L254.8 44 V41 L238.7 51.6 L223.8 40.5 Z" fill="#b5b5b5"/>
<path d="M223.8 38.3 L238.7 26.6 L254.8 37 L240 48.4 Z" fill="#5ea7e6"/>
<path d="M224.5 41.5 L243 27.5 Q247 25 249 28 Q250 30.5 247 33 L229 47 Q226 50 228.5 52 Q231 53.5 234 51 L254 36.5" fill="none" stroke="#0f4a7e" stroke-width="1"/>

<!-- 2D pocket -->
<path d="M266 39.5 L282 25.4 L297.8 37 V44 L282 56.8 L266 44 Z" fill="#ececec" stroke="#666" stroke-width="1" stroke-linejoin="round"/>
<path d="M268.5 40.5 Q282 27 295.5 40 V43.5 L282 54.5 L268.5 43.5 Z" fill="#d0d0d0"/>
<path d="M270.5 44.3 Q276 38.2 282.5 37.4 Q289 38 293.8 43.8 Q288 51 282 52.4 Q276 51 270.5 44.3 Z" fill="#4f9fe6"/>
<path d="M274 45 Q278 41.5 282.5 43 Q287 44.4 290.6 43.4 Q287 47.6 282 46.6 Q277 45.6 274 45 Z M271.5 44.5 Q277 38.8 283 39.6 Q289 40.5 292.6 43.6 Q288 49.8 282 50 Q276 49.5 271.5 44.5 Z" fill="none" stroke="#0f3d6e" stroke-width="0.9"/>

<!-- 2D face -->
<path d="M317 35.6 L309.8 41.3 L325 54.2 L340.2 41.3 L333 35.6" fill="none" stroke="#2f95ea" stroke-width="1"/>
<path d="M314 36.1 V41.5 L325 50.4 V44.5 Z" fill="#62abe8"/>
<path d="M336 36.1 V41.5 L325 50.4 V44.5 Z" fill="#3f8fd6"/>
<path d="M314 36.1 L325 27.2 L336 36.1 L325 44.5 Z" fill="#f8f8f8" stroke="#555" stroke-width="0.9" stroke-linejoin="round"/>

<!-- 3D adaptive -->
<path d="M364.5 55.5 V34.2 L372.4 26.3 H393.6 V47.7 L386 55.5 Z" fill="#e2e2e2" stroke="#444" stroke-width="1" stroke-linejoin="round"/>
<path d="M366 36 L374 36 V48 H388 L385.5 54 H366 Z" fill="#d4d4d4"/>
<path d="M371.7 33.5 L375 30.5 H389.8 V46 L388 48.5 H374.5 Z" fill="#4f9fe6"/>
<path d="M375 30.5 L374.5 48.5 H371.7 V33.5 Z" fill="#3b86cf"/>
<path d="M374.5 46 H388 V48.5 H374.5 Z" fill="#8fc4f2"/>
<path d="M370.5 41 Q374 36.5 380 35.5 H391 M370.5 47.5 Q374 43 380 42 H391 M375 38.5 Q380 37 384 35.5 M375 45 Q380 43.5 384 42" fill="none" stroke="#0c2f5a" stroke-width="1"/>

<!-- PROBING ghost + wrench -->
<g opacity="0.85"><path d="M407.2 44.5 L421 35.5 L437 41 V46 L420 56 L407.2 49.5 Z" fill="#ececec" stroke="#b8b8b8" stroke-width="0.8" stroke-linejoin="round"/><path d="M407.2 44.5 L420 51 L437 41 M420 51 V56" fill="none" stroke="#b8b8b8" stroke-width="0.8"/><path d="M413 44.5 L421.5 39.5 L430 42.5 L421 48 Z M417 44.5 L421.5 42 L426 43.3 L421.5 46 Z" fill="none" stroke="#c4c4c4" stroke-width="0.8"/></g>
<use href="#wrench" x="428.6" y="34.7"/>

<!-- 3D parallel -->
<path d="M450.5 54 V33 L457.5 25.5 H480.5 V44.8 L471.2 54 Z" fill="#ececec" stroke="#444" stroke-width="1" stroke-linejoin="round"/>
<path d="M471.2 54 V45.5 Q472 34 480.5 29.5 V44.8 Z" fill="#b9b9b9"/>
<path d="M450.5 46 H471.2 V54 H450.5 Z" fill="#d8d8d8"/>
<path d="M450.8 32.5 L452.5 31 H478 Q472.5 35 472 45.8 H450.8 Z" fill="#5ea7e6"/>
<path d="M449.5 52.5 Q455 51 456.5 42 Q458 28.5 463 28.5 Q466.5 29 464.5 41 Q462.5 51 466 51 Q469.5 50.5 470.5 41 Q471.5 31.5 479 29" fill="none" stroke="#0f3d6e" stroke-width="1"/>

<!-- 3D dome -->
<path d="M493 41 V45 Q494 51.8 508.3 52 Q522.5 51.8 523.6 45 V41 Z" fill="#f4f4f4" stroke="#777" stroke-width="0.8"/>
<path d="M493 42 Q493 28 508.3 27.7 Q523.6 28 523.6 42 Q520 46.5 508.3 46.8 Q497 46.5 493 42 Z" fill="#4f9fe6"/>
<path d="M499 37.5 Q500 31 508 30.5 Q516 30.8 517.5 37 Q513 41 508 41.2 Q502 41 499 37.5 Z M504 36.5 L508.5 33 L513 36.8 Q508 38.5 504 36.5 Z" fill="none" stroke="#0f3d6e" stroke-width="1"/>

<!-- 3D contour -->
<path d="M536.3 48.5 V54 H558.5 L565.6 47.5 V43 Z" fill="#dcdcdc" stroke="#777" stroke-width="0.8" stroke-linejoin="round"/>
<path d="M558.5 54 V48.8 L565.6 43 V47.5 Z" fill="#b5b5b5"/>
<path d="M536.3 48.5 Q541 40 542.5 28.5 L545 26.4 H548.5 Q549 34 556 39.5 L565.6 43 L558.5 48.8 Z" fill="#4f9fe6"/>
<path d="M542.5 28.5 L545 26.4 H548.5 L546.5 29 Z" fill="#f4f4f4" stroke="#777" stroke-width="0.5"/>
<path d="M540.5 34 Q546 35.5 551 32.5 M539.5 39.5 Q548 41 556 36 M538 44.5 Q550 46 561 39.5" fill="none" stroke="#0f3d6e" stroke-width="1"/>

<!-- DRILLING drill -->
<path d="M589.3 48.6 L598.6 33.3 H620.5 V38.6 L611 48.6 Z" fill="#f2f2f2" stroke="#444" stroke-width="1" stroke-linejoin="round"/>
<path d="M589.3 43.3 H611 L620.5 33.3 M611 43.3 V48.6" fill="none" stroke="#444" stroke-width="0.9"/>
<path d="M589.3 43.3 H611 V48.6 H589.3 Z" fill="#dedede" stroke="#444" stroke-width="0.9"/>
<rect x="600.2" y="26.5" width="10.4" height="13.5" fill="url(#metal)"/>
<ellipse cx="605.4" cy="27" rx="5.2" ry="2" fill="#d6d6d6" stroke="#555" stroke-width="0.8"/>
<path d="M600.2 27 V39.5 Q605.4 41.5 610.6 39.5 V27" fill="none" stroke="#555" stroke-width="0.8"/>
<path d="M600.5 33 L610.3 29 M600.5 37 L610.3 33" stroke="#6a6a6a" stroke-width="1.4"/>
<path d="M600.2 48.6 V54.5 Q605.4 57.5 610.6 54.5 V48.6 Z" fill="url(#metal)" stroke="#555" stroke-width="0.8"/>
<path d="M600.5 53.5 L610.3 49.5" stroke="#6a6a6a" stroke-width="1.4"/>
<path d="M600.2 39.5 V48.6 M610.6 39.5 V48.6" stroke="#1e8be0" stroke-width="1.1"/>

<!-- DRILLING ghost + wrench -->
<g opacity="0.85"><path d="M633.5 44 L643 35 H664 V42 L656 48.5 H633.5 Z" fill="#e6e6e6" stroke="#c8c8c8" stroke-width="0.8" stroke-linejoin="round"/><path d="M644 26.5 H652 V37 H644 Z M644 48.5 V54 L648 56.5 L653 54 V48.5 Z" fill="#dedede" stroke="#cfcfcf" stroke-width="0.8"/><path d="M645 54 L652.5 49.5" stroke="#c0c0c0" stroke-width="1.2"/></g>
<path d="M632.5 30.5 H640.5 M636.5 26.5 V34.5" stroke="#b5b5b5" stroke-width="1"/>
<use href="#wrench" x="654" y="35"/>

<!-- MULTI-AXIS -->
<path d="M706.3 34.3 H737.8 V40 L724.5 54.6 Z" fill="#eeeeee" stroke="#555" stroke-width="0.9" stroke-linejoin="round"/>
<path d="M737.8 34.8 V40 L724.5 54.6 L729.5 42 Z" fill="#b4b4b4"/>
<path d="M706.3 34.6 H722 L729.5 42 L724.5 54.6 L715 45 H706.3 Z" fill="#5ea7e6"/>
<path d="M729.5 42 L724.5 54.6 L719 48.5 L723 39 Z" fill="#4592dd"/>
<g transform="rotate(24 722 40)"><rect x="717.5" y="31" width="8.4" height="19" rx="3" fill="url(#metal)" stroke="#555" stroke-width="0.8"/><path d="M718 40 L725.5 36.5 M718 44.5 L725.5 41 M718 48.5 L725.5 45" stroke="#666" stroke-width="1.3"/><rect x="714.2" y="25.3" width="15" height="7.8" rx="3" fill="#e4e4e4" stroke="#666" stroke-width="0.9"/></g>

<!-- ACTIONS simulate -->
<path d="M796 28.5 L782 41.6 L796.6 55.6 L810 42.3 L803.5 36" fill="none" stroke="#1e8be0" stroke-width="1.1" stroke-linejoin="miter"/>
<path d="M797.5 36 L791 41.8 L796 46.8 L799 44" fill="none" stroke="#1e8be0" stroke-width="1.1"/>
<rect x="797.2" y="30" width="5.8" height="13.6" rx="1.6" fill="url(#metal)" stroke="#666" stroke-width="0.8"/>
<path d="M797.6 35.5 L802.6 32.5 M797.6 39 L802.6 36 M797.6 42.3 L802.6 39.3" stroke="#6a6a6a" stroke-width="1.1"/>
<rect x="795" y="25.4" width="9.8" height="5" rx="1.8" fill="#e2e2e2" stroke="#666" stroke-width="0.9"/>
<!-- next icon (clipped by dialog) -->
<path d="M828 25.2 H825.4 V56.4 H828" fill="none" stroke="#444" stroke-width="1"/>

<!-- SELECT -->
<rect x="1106.5" y="25.5" width="27" height="21" fill="none" stroke="#25a94a" stroke-width="1" stroke-dasharray="3.2 2.2"/>
<path d="M1127.5 39.5 V52.8 L1130.6 49.8 L1132.8 55.2 L1135 54.2 L1132.8 49 L1137 48.8 Z" fill="#fff" stroke="#222" stroke-width="0.9" stroke-linejoin="round"/>
</svg>
<!--ICONS_END-->
</div>

<!-- ======= BROWSER ======= -->
<div class="abs" id="browserhdr">
  <svg class="abs" style="left:4px;top:7px" width="12" height="10" viewBox="0 0 12 10"><path d="M5 2 L0.8 5 L5 8 Z M10 2 L5.8 5 L10 8 Z" fill="#222"/></svg>
  <div class="abs" style="left:24px;top:5px;font-size:11px;color:#444;transform:scaleX(.91);transform-origin:0 0;">BROWSER</div>
  <svg class="abs" style="left:277px;top:7px" width="10" height="10" viewBox="0 0 10 10"><circle cx="5" cy="5" r="4.6" fill="#222"/><rect x="2" y="4.2" width="6" height="1.6" fill="#fff"/></svg>
  <div class="abs" style="left:293px;top:4px;width:1px;height:13px;background:#777;"></div>
  <div class="abs" style="left:295px;top:6px;width:1px;height:9px;background:#aaa;"></div>
</div>
<div class="abs" id="tree" style="left:0;top:0;">
<svg width="0" height="0" style="position:absolute">
 <defs>
  <symbol id="eye" viewBox="0 0 18 12"><path d="M1 6 Q9 -2.5 17 6 Q9 14.5 1 6 Z" fill="#8c8c8c"/><circle cx="9" cy="6" r="3.3" fill="#f1f1f1"/><circle cx="9" cy="6" r="2" fill="#8c8c8c"/></symbol>
  <symbol id="eyeoff" viewBox="0 0 18 14"><path d="M1 7 Q9 -1.5 17 7 Q9 15.5 1 7 Z" fill="#dcdcdc"/><circle cx="9" cy="7" r="3.2" fill="#f1f1f1"/><circle cx="9" cy="7" r="1.9" fill="#dcdcdc"/><path d="M3 0.5 L15.5 13" stroke="#f1f1f1" stroke-width="3.2"/><path d="M3.2 1.2 L14.8 12.8" stroke="#d6d6d6" stroke-width="1.5"/></symbol>
  <symbol id="comp" viewBox="0 0 18 18"><path d="M2.5 16.5 V7.2 Q2.5 6 3.3 5 L4.8 3.2 Q5.6 2.3 7 2.3 H9.6 Q11.2 2.3 11.2 4 V7.6 H14 Q16 7.6 16 9.6 V13.4 Q16 14.3 15.3 15 L14.4 16 Q13.9 16.5 13 16.5 Z" fill="#fff" stroke="#444" stroke-width="1" stroke-linejoin="round"/><path d="M2.6 7 H7.4 Q8.6 7 8.6 8.2 V16.4 M8.4 7.2 L11 3.2 M8.6 11.4 H12.4 Q13.6 11.4 13.6 12.6 V16.3 M13.4 11.5 L15.6 8.4" fill="none" stroke="#444" stroke-width="0.9"/></symbol>
  <symbol id="tri_open" viewBox="0 0 12 12"><linearGradient id="tg2" x1="1" y1="0" x2="0" y2="1"><stop offset="0" stop-color="#555"/><stop offset="1" stop-color="#bbb"/></linearGradient><path d="M10.5 1 V10.5 H1 Z" fill="url(#tg2)" stroke="#222" stroke-width="1.1" stroke-linejoin="round"/></symbol>
  <symbol id="tri_closed" viewBox="0 0 10 14"><path d="M1 1 L8.5 7 L1 13 Z" fill="#fff" stroke="#222" stroke-width="1.2" stroke-linejoin="round"/></symbol>
  <symbol id="setupi" viewBox="0 0 18 14"><path d="M1.5 12.5 V1.5 H6 L7.5 3.5 H11 V6" fill="none" stroke="#444" stroke-width="1"/><path d="M1.5 12.5 L5 6 H16.5 L13 12.5 Z" fill="#fff" stroke="#444" stroke-width="1" stroke-linejoin="round"/><path d="M6 5 L9 2.6 L12 5" fill="none" stroke="#666" stroke-width="0.9"/></symbol>
 </defs>
</svg>

<!-- row 1 : lion_low v4 -->
<svg class="abs" style="left:15px;top:118px" width="12" height="12"><use href="#tri_open"/></svg>
<div class="abs row" style="left:35px;top:114px;width:123px;"></div>
<svg class="abs" style="left:37px;top:118px" width="17" height="12"><use href="#eye"/></svg>
<svg class="abs" style="left:61px;top:115px" width="19" height="19"><use href="#comp"/></svg>
<div class="abs rtxt" style="left:93px;top:118px">lion_low v4</div>

<!-- row 2 : units -->
<div class="abs row" style="left:53px;top:138px;width:90px;"></div>
<svg class="abs" style="left:55px;top:139px" width="17" height="18" viewBox="0 0 17 18"><path d="M1.5 1.5 H10.5 L14.5 5.5 V16 H1.5 Z" fill="#fff" stroke="#444" stroke-width="1" stroke-linejoin="round"/><rect x="1" y="13" width="14" height="4" fill="#e8b600" stroke="#a98200" stroke-width="0.6"/><path d="M3.5 13 v2 M6 13 v2 M8.5 13 v2 M11 13 v2 M13 13 v2" stroke="#7a5c00" stroke-width="0.6"/></svg>
<div class="abs rtxt" style="left:86px;top:142px">Units: mm</div>

<!-- row 3 : named views -->
<svg class="abs" style="left:35px;top:165px" width="10" height="14"><use href="#tri_closed"/></svg>
<div class="abs row" style="left:53px;top:162px;width:109px;"></div>
<svg class="abs" style="left:55px;top:165px" width="18" height="14" viewBox="0 0 18 14"><path d="M1 1 H7 L8.5 3 H17 V13 H1 Z" fill="#8a8a8a"/><path d="M1 4.2 H17" stroke="#b5b5b5" stroke-width="0.8"/></svg>
<div class="abs rtxt" style="left:86px;top:166px">Named Views</div>

<!-- row 4 : models -->
<svg class="abs" style="left:35px;top:189px" width="10" height="14"><use href="#tri_closed"/></svg>
<div class="abs row" style="left:53px;top:186px;width:103px;"></div>
<svg class="abs" style="left:56px;top:190px" width="17" height="12"><use href="#eye"/></svg>
<svg class="abs" style="left:80px;top:187px" width="19" height="19"><use href="#comp"/></svg>
<div class="abs rtxt" style="left:111px;top:190px">Models</div>

<!-- row 5 : setups -->
<svg class="abs" style="left:34px;top:214px" width="12" height="12"><use href="#tri_open"/></svg>
<div class="abs row" style="left:53px;top:210px;width:78px;"></div>
<svg class="abs" style="left:55px;top:213px" width="18" height="14"><use href="#setupi"/></svg>
<div class="abs rtxt" style="left:86px;top:214px">Setups</div>

<!-- row 6 : setup1 -->
<svg class="abs" style="left:52px;top:238px" width="12" height="12"><use href="#tri_open"/></svg>
<div class="abs row" style="left:71px;top:234px;width:107px;"></div>
<svg class="abs" style="left:73px;top:237px" width="18" height="14"><use href="#setupi"/></svg>
<div class="abs" style="left:96px;top:234px;width:57px;height:20px;background:#a9cdf6;"></div>
<div class="abs rtxt" style="left:105px;top:238px;font-weight:bold;color:#1c2f55;">Setup1</div>
<svg class="abs" style="left:156px;top:237px" width="15" height="15" viewBox="0 0 15 15"><circle cx="7.5" cy="7.5" r="6.2" fill="#fff" stroke="#333" stroke-width="1"/><circle cx="7.5" cy="7.5" r="2.6" fill="#222"/></svg>

<!-- row 7 : adaptive3 -->
<svg class="abs" style="left:71px;top:261px" width="10" height="14"><use href="#tri_closed"/></svg>
<div class="abs row" style="left:89px;top:258px;width:139px;"></div>
<svg class="abs" style="left:92px;top:262px" width="17" height="13"><use href="#eyeoff"/></svg>
<svg class="abs" style="left:117px;top:260px" width="18" height="17" viewBox="0 0 18 17"><path d="M1.5 5 L5 1.5 H16.5 V12 L13 15.5 H1.5 Z" fill="#e4e4e4" stroke="#333" stroke-width="1" stroke-linejoin="round"/><path d="M4.5 5.5 L7 3.5 H14 V11 L11.5 12.5 H4.5 Z" fill="#3f8fd8"/><path d="M3.5 8.5 Q8 5 14.5 6.5 M3.5 11 Q8 7.5 14.5 9" stroke="#0d2a52" stroke-width="1.1" fill="none"/></svg>
<div class="abs rtxt" style="left:147px;top:262px">[T1] Adaptive3</div>

<!-- row 8 : parallel1 -->
<svg class="abs" style="left:71px;top:285px" width="10" height="14"><use href="#tri_closed"/></svg>
<div class="abs row" style="left:89px;top:282px;width:164px;"></div>
<svg class="abs" style="left:92px;top:284px" width="17" height="17" viewBox="0 0 17 17"><circle cx="8.5" cy="8.5" r="8" fill="#f01832"/><rect x="7.3" y="3.2" width="2.4" height="6.6" rx="1" fill="#fff"/><circle cx="8.5" cy="12.6" r="1.4" fill="#fff"/></svg>
<svg class="abs" style="left:117px;top:286px" width="17" height="13"><use href="#eyeoff"/></svg>
<svg class="abs" style="left:142px;top:284px" width="18" height="17" viewBox="0 0 18 17"><path d="M1.5 14.5 V6 L6 1.5 H16.5 V10 L12 14.5 Z" fill="#dcdcdc" stroke="#333" stroke-width="1" stroke-linejoin="round"/><path d="M3 13 L4.5 5.5 Q5 3 7.5 3 H14.5 L12.5 11 Q12 13 10 13 Z" fill="#4d9be0"/><path d="M5 13 L7 4 M7.5 13 L9.5 3.5 M10 13 L12 3.5 M12.5 11.5 L14.5 3" stroke="#0d2a52" stroke-width="0.9" fill="none"/></svg>
<div class="abs rtxt" style="left:173px;top:286px;font-weight:bold;">[T1] Parallel1</div>
</div>


<div class="abs" id="tooltip"><span style="display:inline-block;transform:scaleX(.945);">Change Workspace</span></div>

<!-- ======= DIALOG ======= -->
<div class="abs" id="dlg">
  <!-- title -->
  <svg class="abs" style="left:5px;top:2px" width="10" height="10" viewBox="0 0 10 10"><circle cx="5" cy="5" r="4.6" fill="#222"/><rect x="2" y="4.2" width="6" height="1.6" fill="#fff"/></svg>
  <div class="abs" style="left:24px;top:1px;font-size:11px;color:#555;white-space:nowrap;transform:scaleX(.947);transform-origin:0 0;">PARALLEL : PARALLEL1</div>
  <!-- tabs -->
  <div class="abs" style="left:0;top:47px;width:248px;height:1px;background:#c8c8c8;"></div>
  <div class="abs" style="left:0;top:19px;width:248px;height:1px;background:#dcdcdc;"></div>
  <div class="abs" style="left:27px;top:22px;width:1px;height:25px;background:#d2d2d2;"></div>
  <div class="abs" style="left:56px;top:22px;width:1px;height:25px;background:#d2d2d2;"></div>
  <div class="abs" style="left:143px;top:22px;width:1px;height:25px;background:#d2d2d2;"></div>
  <div class="abs" style="left:85px;top:22px;width:30px;height:26px;box-sizing:border-box;border:1px solid #c4c4c4;border-bottom:none;background:#f0f0f0;"></div>
  <!--TABICONS_START--><svg class="abs" style="left:-1px;top:18px" width="160" height="34" viewBox="827 18 160 34">
<defs><linearGradient id="tg" x1="0" x2="1"><stop offset="0" stop-color="#bfbfbf"/><stop offset="0.4" stop-color="#ffffff"/><stop offset="1" stop-color="#a5a5a5"/></linearGradient>
<linearGradient id="bx" x1="0" x2="0" y1="0" y2="1"><stop offset="0" stop-color="#ffffff"/><stop offset="1" stop-color="#d4d8de"/></linearGradient></defs>
<!-- tool -->
<g transform="translate(1,0)"><path d="M839.8 35 L840.6 42.6 Q842.2 44.2 844 42.6 L845 35 Z" fill="url(#tg)" stroke="#333" stroke-width="0.9" stroke-linejoin="round"/>
<path d="M840.6 42.6 L844.8 36.5 L844.2 42.4 Q842.4 44 840.6 42.6 Z" fill="#1a1a1a"/>
<rect x="837.4" y="28.4" width="10.2" height="7" rx="2.6" fill="url(#tg)" stroke="#444" stroke-width="0.9"/></g>
<!-- geometry -->
<path d="M862.2 42.6 V35.2 L866.6 31 H876 V37.6 L871.4 42.6 Z" fill="url(#bx)" stroke="#333" stroke-width="1" stroke-linejoin="round"/>
<path d="M862.2 35.2 H871.4 V42.6 M871.4 35.2 L876 31" fill="none" stroke="#333" stroke-width="0.9"/>
<path d="M871.6 35.4 L875.6 31.4 V37.4 L871.6 42 Z" fill="#9aa3ae"/>
<path d="M866.8 31.2 L870.6 27.4 H876.2 V33.8 L873 36.6 V31.4 Z" fill="#7db9ee" stroke="#1f78d0" stroke-width="0.9" stroke-linejoin="round"/>
<!-- heights -->
<path d="M891.2 42.6 V35.2 L895.6 31 H905.6 V37.6 L901 42.6 Z" fill="url(#bx)" stroke="#333" stroke-width="1" stroke-linejoin="round"/>
<path d="M891.2 35.2 H901 V42.6 M901 35.2 L905.6 31" fill="none" stroke="#333" stroke-width="0.9"/>
<path d="M901.2 35.4 L905.2 31.4 V37.4 L901.2 42 Z" fill="#9aa3ae"/>
<path d="M891 32.4 L896.2 27.2 H906.2 L901.6 32.4 Z" fill="#f6a11c"/>
<path d="M893.5 30.6 H903.8" stroke="#d88400" stroke-width="0.7"/>
<!-- passes -->
<path d="M921 27.6 V42 H935.2 V27.6" fill="none" stroke="#2e3440" stroke-width="1.3"/>
<path d="M923.8 27.6 V38.8 H932.4 V27.6" fill="none" stroke="#2e3440" stroke-width="1"/>
<rect x="924.4" y="30" width="7.4" height="1.9" fill="#3f8ee0"/>
<rect x="924.4" y="33.6" width="7.4" height="1.9" fill="#3f8ee0"/>
<!-- linking -->
<path d="M949.6 34.4 V28 H964.4 V34.4" fill="none" stroke="#f2e300" stroke-width="1.5"/>
<path d="M949.2 34.8 H964.8" stroke="#3aa835" stroke-width="1.5"/>
<path d="M949.6 42.2 V38.4 H955.2 V32.4 H958.8 V38.4 H964.4 V42.2 Z" fill="#f4f4f4" stroke="#2e3440" stroke-width="1.1" stroke-linejoin="miter"/>
<path d="M949.2 34.8 H955 M959 34.8 H964.8" stroke="#3aa835" stroke-width="1.5"/>
</svg>
<!--TABICONS_END-->
  <!-- Passes -->
  <svg class="abs" style="left:9px;top:61px" width="9" height="7" viewBox="0 0 9 7"><path d="M0.3 0.5 H8.7 L4.5 6.5 Z" fill="#333"/></svg>
  <div class="abs sec" style="left:24px;top:58px;">Passes</div>

  <div class="abs lbl" style="top:88px">Tolerance</div>
  <div class="abs inp" style="top:84px"><span>0.01 mm</span><div class="spin"><i class="u"></i><i class="d"></i></div></div>

  <div class="abs lbl" style="top:118px">Machine Steep Areas</div>
  <div class="abs cb" style="left:159px;top:117px"></div>
  <div class="abs lbl" style="top:148px">Add Perpendicular Passes</div>
  <div class="abs cb" style="left:159px;top:147px"></div>
  <div class="abs lbl" style="top:178px">Machine Straight On</div>
  <div class="abs cb" style="left:159px;top:177px"></div>
  <div class="abs lbl" style="top:208px">Simple Ordering</div>
  <div class="abs cb" style="left:159px;top:207px"></div>

  <div class="abs lbl" style="top:238px">Pass Direction</div>
  <div class="abs inp" style="top:234px"><span>0 deg</span><div class="spin"><i class="u"></i><i class="d"></i></div></div>

  <!-- highlighted stepover -->
  <svg class="abs" style="left:5px;top:257px" width="74" height="30" viewBox="0 0 74 30"><path d="M4.5 6 Q4 3.5 7 4.2 L18 3.2 L40 3.6 Q55 3 69 5 Q70.5 5.4 70.2 8 L70.5 24 Q70.5 26.4 68 26 L40 26.6 L14 26.8 L12 27.6 L6 27.4 Q4.2 27.4 4.4 25 Z" fill="#f6f410"/></svg>
  <div class="abs lbl" style="top:268px">Stepover</div>
  <div class="abs inp" style="top:264px"><span>0.1 mm</span><div class="spin"><i class="u"></i><i class="d"></i></div></div>
  <svg class="abs" style="left:151px;top:260px" width="56" height="28" viewBox="0 0 56 28"><path d="M3 5 Q3 3 6 3 L50 3.5 Q53 3.5 52.5 7 L52.5 22 Q52.5 25.5 49 25 L6 25 Q3 25 3 22 Z" fill="#f6f410" style="mix-blend-mode:multiply"/></svg>

  <div class="abs lbl" style="top:298px">Direction</div>
  <div class="abs sel" style="top:291px"><span>Both ways</span><i></i></div>

  <div class="abs lbl" style="top:328px">Axial Offset Passes</div>
  <div class="abs cb" style="left:159px;top:327px"></div>

  <div class="abs lbl" style="top:358px">Up/Down Milling</div>
  <div class="abs sel" style="top:351px"><span>Don't care</span><i></i></div>

  <div class="abs hsep" style="top:383px"></div>
  <div class="abs cb" style="left:11px;top:397px"></div>
  <div class="abs sec" style="top:398px">Stock to Leave</div>
  <div class="abs hsep" style="top:423px"></div>
  <div class="abs cb" style="left:11px;top:437px"></div>
  <div class="abs sec" style="top:438px">Fillets</div>
  <div class="abs hsep" style="top:463px"></div>
  <div class="abs cb" style="left:11px;top:477px"></div>
  <div class="abs sec" style="top:478px">Smoothing</div>
  <div class="abs hsep" style="top:503px"></div>
  <div class="abs cb" style="left:11px;top:517px"></div>
  <div class="abs sec" style="top:518px">Feed Optimization</div>

  <div class="abs" style="left:0;top:559px;width:248px;height:1px;background:#cdcdcd;"></div>
  <svg class="abs" style="left:8px;top:571px" width="13" height="13" viewBox="0 0 13 13"><circle cx="6.5" cy="6.5" r="6" fill="#111"/><rect x="5.5" y="5.4" width="2" height="4.6" fill="#fff"/><circle cx="6.5" cy="3.6" r="1.2" fill="#fff"/></svg>
  <div class="abs btn" style="left:107px;">OK</div>
  <div class="abs btn" style="left:177px;">Cancel</div>

</div>

</body>
</html>
